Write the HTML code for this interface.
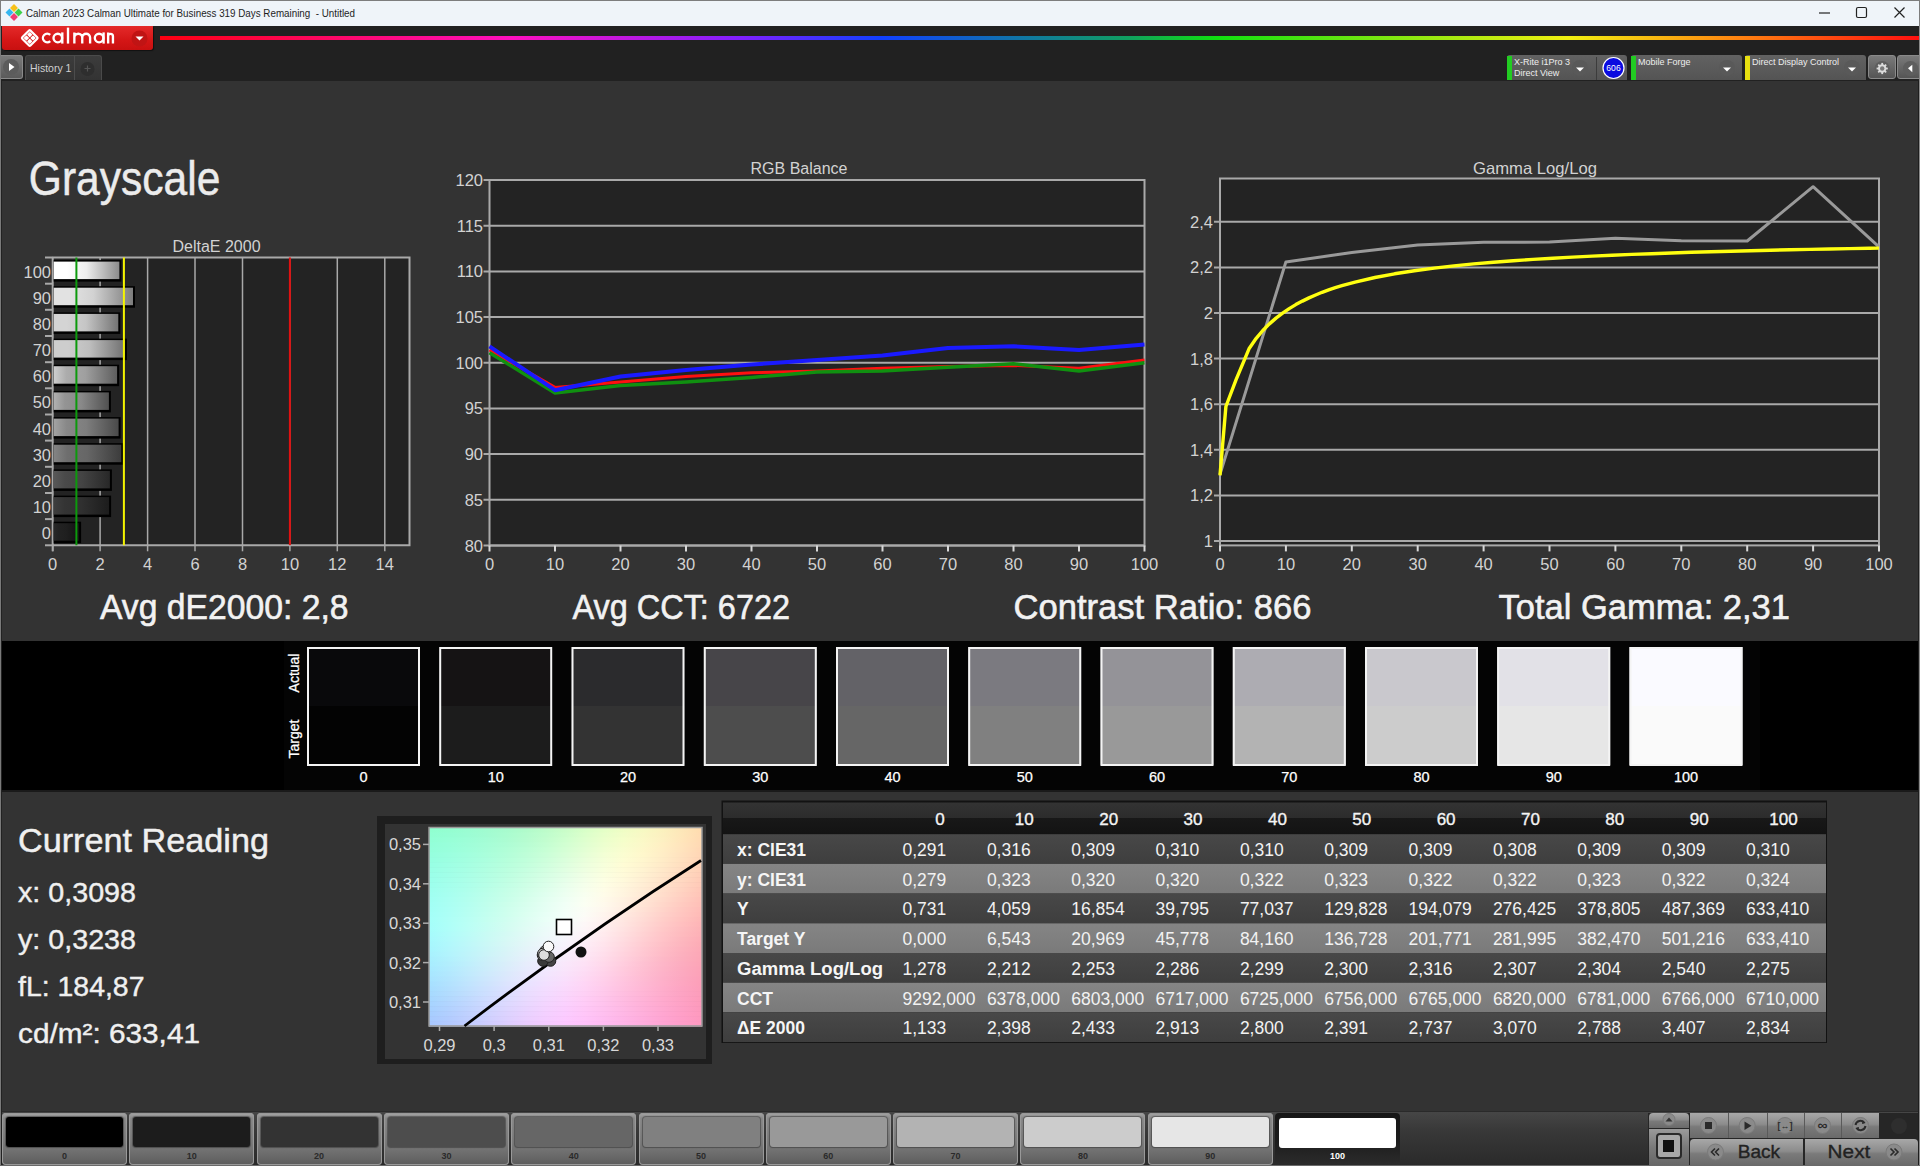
<!DOCTYPE html>
<html><head><meta charset="utf-8"><style>
*{margin:0;padding:0;box-sizing:border-box}
html,body{width:1920px;height:1166px;overflow:hidden;background:#333;font-family:"Liberation Sans",sans-serif}
.a{position:absolute}
svg{position:absolute;left:0;top:0}
</style></head><body>
<div class="a" style="left:0;top:81px;width:1920px;height:1085px;background:#333"></div>
<div class="a" style="left:0;top:0;width:1920px;height:26px;background:#eff4f9;border-top:1px solid #7d7d7d;border-left:1px solid #7d7d7d;border-right:1px solid #7d7d7d"></div>
<div class="a" style="left:0;top:26px;width:1920px;height:55px;background:#212121;border-left:1px solid #555"></div>
<div class="a" style="left:1px;top:641px;width:1917px;height:150px;background:#000"></div>
<svg width="30" height="26" style="left:0;top:0">
<g transform="translate(14,12.5) rotate(45)">
<rect x="-6" y="-6" width="5.6" height="5.6" fill="#f7c21a"/>
<rect x="0.4" y="-6" width="5.6" height="5.6" fill="#3fd14a"/>
<rect x="0.4" y="0.4" width="5.6" height="5.6" fill="#ee3d74"/>
<rect x="-6" y="0.4" width="5.6" height="5.6" fill="#35b6f0"/>
</g></svg>
<svg width="400" height="26" style="left:0;top:0" font-family="Liberation Sans"><text x="26" y="17" font-size="11.5" fill="#1e1e1e" textLength="329" lengthAdjust="spacingAndGlyphs" xml:space="preserve">Calman 2023 Calman Ultimate for Business 319 Days Remaining  - Untitled</text></svg>
<svg width="120" height="26" style="left:1800px;top:0">
<line x1="19" y1="13" x2="30" y2="13" stroke="#222" stroke-width="1.2"/>
<rect x="56.5" y="7.5" width="10" height="10" rx="1.5" fill="none" stroke="#222" stroke-width="1.2"/>
<path d="M94.5 7.5 L104.5 17.5 M104.5 7.5 L94.5 17.5" stroke="#222" stroke-width="1.2"/>
</svg>
<div class="a" style="left:2px;top:26px;width:151px;height:24px;background:linear-gradient(#e42a2a,#d41616 60%,#c81010);border-radius:0 0 3px 3px;box-shadow:1px 1px 1px rgba(0,0,0,.5)"></div>
<svg width="160" height="30" style="left:0;top:26px">
<g transform="translate(29.75,12) rotate(45)" fill="none" stroke="#fff" stroke-width="2.2">
<rect x="-5.8" y="-5.8" width="11.6" height="11.6" rx="1"/>
</g>
<g transform="translate(29.75,12) rotate(45)" fill="#fff">
<rect x="-4.3" y="-4.3" width="3.9" height="3.9" rx="0.6"/><rect x="0.4" y="-4.3" width="3.9" height="3.9" rx="0.6"/>
<rect x="-4.3" y="0.4" width="3.9" height="3.9" rx="0.6"/><rect x="0.4" y="0.4" width="3.9" height="3.9" rx="0.6"/>
</g>
<circle cx="139.5" cy="12.5" r="8" fill="#c01414"/>
<path d="M135.5 10.5 L143.5 10.5 L139.5 14.5 Z" fill="#fff"/>
</svg>
<svg width="130" height="50" style="left:0;top:0">
<g fill="none" stroke="#fff" stroke-width="2.35">
<path d="M50.2 34.9 A4.3 4.3 0 1 0 50.2 41.1"/>
<circle cx="57.8" cy="38" r="4.3"/><path d="M62.3 32.4 V43.6"/>
<path d="M68 27.6 V43.6"/>
<path d="M74.35 43.6 V32.4 M74.35 37.7 A3.95 3.95 0 0 1 82.25 37.7 V43.6 M82.25 37.7 A3.92 3.92 0 0 1 90.1 37.7 V43.6"/>
<circle cx="99.1" cy="38" r="4.3"/><path d="M103.6 32.4 V43.6"/>
<path d="M108.15 43.6 V32.4 M108.15 36.2 A2.4 2.4 0 0 1 112.95 36.2 V43.6"/>
</g></svg>
<div class="a" style="left:160px;top:36px;width:1760px;height:4px;background:linear-gradient(90deg,#ff0010 0%,#ff10c0 20%,#8020ff 33%,#1040ff 41%,#10a060 55%,#10e010 60%,#f0f010 80%,#ff8010 90%,#ff1010 100%)"></div>
<div class="a" style="left:1px;top:55px;width:22px;height:24px;background:linear-gradient(#7a7a7a,#5a5a5a);border-radius:0 3px 3px 0;border:1px solid #8a8a8a;border-left:none"></div>
<svg width="24" height="26" style="left:0;top:55px"><circle cx="11" cy="12" r="8" fill="#5c5c5c"/><path d="M9 8 L14.5 12 L9 16Z" fill="#fff"/></svg>
<div class="a" style="left:25px;top:55px;width:77px;height:25px;background:linear-gradient(#3c3c3c,#333);border-radius:3px 3px 0 0;border:1px solid #4a4a4a;border-bottom:none"></div>
<div class="a" style="left:74px;top:56px;width:1px;height:24px;background:#4c4c4c"></div>
<div class="a" style="left:30px;top:62px;font-size:10.5px;color:#d0d0d0;white-space:nowrap">History 1</div>
<svg width="30" height="26" style="left:74px;top:55px"><circle cx="13.5" cy="14" r="7" fill="#2e2e2e"/><path d="M13.5 10.5v6M10.5 13.5h6" stroke="#555" stroke-width="1.2"/></svg>
<div class="a" style="left:1507px;top:55px;width:120px;height:25px;background:linear-gradient(#626262,#545454);border-radius:3px 3px 0 0"></div><div class="a" style="left:1507px;top:56px;width:5px;height:24px;background:#22cc22"></div><div class="a" style="left:1514px;top:56.5px;font-size:9px;line-height:11.75px;color:#eee;white-space:nowrap">X-Rite i1Pro 3<br>Direct View</div>
<div class="a" style="left:1631px;top:55px;width:111px;height:25px;background:linear-gradient(#626262,#545454);border-radius:3px 3px 0 0"></div><div class="a" style="left:1631px;top:56px;width:5px;height:24px;background:#22cc22"></div><div class="a" style="left:1638px;top:56.5px;font-size:9px;line-height:11.75px;color:#eee;white-space:nowrap">Mobile Forge</div>
<div class="a" style="left:1745px;top:55px;width:121px;height:25px;background:linear-gradient(#626262,#545454);border-radius:3px 3px 0 0"></div><div class="a" style="left:1745px;top:56px;width:5px;height:24px;background:#e8e010"></div><div class="a" style="left:1752px;top:56.5px;font-size:9px;line-height:11.75px;color:#eee;white-space:nowrap">Direct Display Control</div>
<div class="a" style="left:1596px;top:57px;width:1px;height:23px;background:#3c3c3c"></div>
<svg width="420" height="30" style="left:1500px;top:52px">
<circle cx="80" cy="16" r="8" fill="#595959"/><path d="M76 15.5h8l-4 4z" fill="#fff"/>
<circle cx="113.5" cy="16" r="10.5" fill="#0a0ae0" stroke="#fff" stroke-width="1.2"/>
<text x="113.5" y="19.2" font-size="8.6" fill="#fff" text-anchor="middle" font-family="Liberation Sans">606</text>
<circle cx="227" cy="16" r="8" fill="#595959"/><path d="M223 15.5h8l-4 4z" fill="#fff"/>
<circle cx="352" cy="16" r="8" fill="#595959"/><path d="M348 15.5h8l-4 4z" fill="#fff"/>
</svg>
<div class="a" style="left:1868px;top:55px;width:28px;height:24px;background:linear-gradient(#7a7a7a,#555);border-radius:3px;border:1px solid #8a8a8a"></div>
<div class="a" style="left:1897px;top:55px;width:23px;height:24px;background:linear-gradient(#7a7a7a,#555);border-radius:3px 0 0 3px;border:1px solid #8a8a8a"></div>
<svg width="60" height="30" style="left:1860px;top:52px">
<g transform="translate(22.2,16.5)"><circle r="7.6" fill="#5e5e5e"/><g fill="#dcdcdc"><circle r="4.2"/>
<rect x="-0.9" y="-5.6" width="1.8" height="11.2"/><rect x="-0.9" y="-5.6" width="1.8" height="11.2" transform="rotate(45)"/><rect x="-0.9" y="-5.6" width="1.8" height="11.2" transform="rotate(90)"/><rect x="-0.9" y="-5.6" width="1.8" height="11.2" transform="rotate(135)"/></g>
<circle r="2.2" fill="#7a7a7a"/></g>
<circle cx="50.5" cy="16.5" r="7.6" fill="#5e5e5e"/><path d="M52.3 12.7 L48 16.3 L52.3 20.3z" fill="#fff"/>
</svg>
<svg width="1920" height="640" style="left:0;top:0" font-family="Liberation Sans">
<text x="28.8" y="194.6" font-size="48.5" fill="#ececec" stroke="#ececec" stroke-width="0.5" textLength="191.5" lengthAdjust="spacingAndGlyphs">Grayscale</text>
<text x="216.5" y="252" font-size="16" fill="#d2d2d2" text-anchor="middle">DeltaE 2000</text>
<rect x="52.7" y="257.5" width="356.8" height="287.79999999999995" fill="#232323"/>
<line x1="147.6" y1="257.5" x2="147.6" y2="545.3" stroke="#a9a9a9" stroke-width="1.5"/>
<line x1="195.0" y1="257.5" x2="195.0" y2="545.3" stroke="#a9a9a9" stroke-width="1.5"/>
<line x1="242.5" y1="257.5" x2="242.5" y2="545.3" stroke="#a9a9a9" stroke-width="1.5"/>
<line x1="289.9" y1="257.5" x2="289.9" y2="545.3" stroke="#a9a9a9" stroke-width="1.5"/>
<line x1="337.3" y1="257.5" x2="337.3" y2="545.3" stroke="#a9a9a9" stroke-width="1.5"/>
<line x1="384.8" y1="257.5" x2="384.8" y2="545.3" stroke="#a9a9a9" stroke-width="1.5"/>
<line x1="100.1" y1="257.5" x2="100.1" y2="545.3" stroke="#a9a9a9" stroke-width="1.5"/>
<path d="M52.7 257.5 H409.5 V545.3 H52.7" fill="none" stroke="#a9a9a9" stroke-width="2"/>
<line x1="52.7" y1="257.5" x2="52.7" y2="551.3" stroke="#a9a9a9" stroke-width="2"/>
<defs>
<linearGradient id="bg0" x1="0" x2="1" y1="0" y2="0"><stop offset="0" stop-color="#ffffff"/><stop offset="0.2" stop-color="#ffffff"/><stop offset="0.5" stop-color="#ededed"/><stop offset="1" stop-color="#8c8c8c"/></linearGradient>
<linearGradient id="bg1" x1="0" x2="1" y1="0" y2="0"><stop offset="0" stop-color="#e2e2e2"/><stop offset="0.2" stop-color="#e2e2e2"/><stop offset="0.5" stop-color="#d2d2d2"/><stop offset="1" stop-color="#7c7c7c"/></linearGradient>
<linearGradient id="bg2" x1="0" x2="1" y1="0" y2="0"><stop offset="0" stop-color="#d4d4d4"/><stop offset="0.2" stop-color="#d4d4d4"/><stop offset="0.5" stop-color="#c5c5c5"/><stop offset="1" stop-color="#747474"/></linearGradient>
<linearGradient id="bg3" x1="0" x2="1" y1="0" y2="0"><stop offset="0" stop-color="#cdcdcd"/><stop offset="0.2" stop-color="#cdcdcd"/><stop offset="0.5" stop-color="#bebebe"/><stop offset="1" stop-color="#707070"/></linearGradient>
<linearGradient id="bg4" x1="0" x2="1" y1="0" y2="0"><stop offset="0" stop-color="#cecece"/><stop offset="0.2" stop-color="#acacac"/><stop offset="0.5" stop-color="#9f9f9f"/><stop offset="1" stop-color="#5e5e5e"/></linearGradient>
<linearGradient id="bg5" x1="0" x2="1" y1="0" y2="0"><stop offset="0" stop-color="#b1b1b1"/><stop offset="0.2" stop-color="#949494"/><stop offset="0.5" stop-color="#898989"/><stop offset="1" stop-color="#515151"/></linearGradient>
<linearGradient id="bg6" x1="0" x2="1" y1="0" y2="0"><stop offset="0" stop-color="#a3a3a3"/><stop offset="0.2" stop-color="#888888"/><stop offset="0.5" stop-color="#7e7e7e"/><stop offset="1" stop-color="#4a4a4a"/></linearGradient>
<linearGradient id="bg7" x1="0" x2="1" y1="0" y2="0"><stop offset="0" stop-color="#848484"/><stop offset="0.2" stop-color="#6e6e6e"/><stop offset="0.5" stop-color="#666666"/><stop offset="1" stop-color="#3c3c3c"/></linearGradient>
<linearGradient id="bg8" x1="0" x2="1" y1="0" y2="0"><stop offset="0" stop-color="#585858"/><stop offset="0.2" stop-color="#4a4a4a"/><stop offset="0.5" stop-color="#444444"/><stop offset="1" stop-color="#282828"/></linearGradient>
<linearGradient id="bg9" x1="0" x2="1" y1="0" y2="0"><stop offset="0" stop-color="#3e3e3e"/><stop offset="0.2" stop-color="#343434"/><stop offset="0.5" stop-color="#303030"/><stop offset="1" stop-color="#1c1c1c"/></linearGradient>
<linearGradient id="bg10" x1="0" x2="1" y1="0" y2="0"><stop offset="0" stop-color="#282828"/><stop offset="0.2" stop-color="#222222"/><stop offset="0.5" stop-color="#1f1f1f"/><stop offset="1" stop-color="#121212"/></linearGradient>
</defs>
<rect x="53.7" y="260.1" width="67.7" height="21.5" fill="#000"/>
<rect x="53.7" y="261.6" width="65.7" height="17.5" fill="url(#bg0)"/>
<text x="51" y="277.6" font-size="16.5" fill="#d2d2d2" text-anchor="end">100</text>
<rect x="53.7" y="286.2" width="81.3" height="21.5" fill="#000"/>
<rect x="53.7" y="287.7" width="79.3" height="17.5" fill="url(#bg1)"/>
<text x="51" y="303.7" font-size="16.5" fill="#d2d2d2" text-anchor="end">90</text>
<rect x="53.7" y="312.4" width="66.6" height="21.5" fill="#000"/>
<rect x="53.7" y="313.9" width="64.6" height="17.5" fill="url(#bg2)"/>
<text x="51" y="329.9" font-size="16.5" fill="#d2d2d2" text-anchor="end">80</text>
<rect x="53.7" y="338.6" width="73.3" height="21.5" fill="#000"/>
<rect x="53.7" y="340.1" width="71.3" height="17.5" fill="url(#bg3)"/>
<text x="51" y="356.1" font-size="16.5" fill="#d2d2d2" text-anchor="end">70</text>
<rect x="53.7" y="364.7" width="65.4" height="21.5" fill="#000"/>
<rect x="53.7" y="366.2" width="63.4" height="17.5" fill="url(#bg4)"/>
<text x="51" y="382.2" font-size="16.5" fill="#d2d2d2" text-anchor="end">60</text>
<rect x="53.7" y="390.9" width="57.2" height="21.5" fill="#000"/>
<rect x="53.7" y="392.4" width="55.2" height="17.5" fill="url(#bg5)"/>
<text x="51" y="408.4" font-size="16.5" fill="#d2d2d2" text-anchor="end">50</text>
<rect x="53.7" y="417.1" width="66.9" height="21.5" fill="#000"/>
<rect x="53.7" y="418.6" width="64.9" height="17.5" fill="url(#bg6)"/>
<text x="51" y="434.6" font-size="16.5" fill="#d2d2d2" text-anchor="end">40</text>
<rect x="53.7" y="443.2" width="69.6" height="21.5" fill="#000"/>
<rect x="53.7" y="444.7" width="67.6" height="17.5" fill="url(#bg7)"/>
<text x="51" y="460.7" font-size="16.5" fill="#d2d2d2" text-anchor="end">30</text>
<rect x="53.7" y="469.4" width="58.2" height="21.5" fill="#000"/>
<rect x="53.7" y="470.9" width="56.2" height="17.5" fill="url(#bg8)"/>
<text x="51" y="486.9" font-size="16.5" fill="#d2d2d2" text-anchor="end">20</text>
<rect x="53.7" y="495.6" width="57.4" height="21.5" fill="#000"/>
<rect x="53.7" y="497.1" width="55.4" height="17.5" fill="url(#bg9)"/>
<text x="51" y="513.1" font-size="16.5" fill="#d2d2d2" text-anchor="end">10</text>
<rect x="53.7" y="521.7" width="27.4" height="21.5" fill="#000"/>
<rect x="53.7" y="523.2" width="25.4" height="17.5" fill="url(#bg10)"/>
<text x="51" y="539.2" font-size="16.5" fill="#d2d2d2" text-anchor="end">0</text>
<line x1="45" y1="257.5" x2="53" y2="257.5" stroke="#a9a9a9" stroke-width="2"/>
<line x1="45" y1="283.7" x2="53" y2="283.7" stroke="#a9a9a9" stroke-width="2"/>
<line x1="45" y1="309.8" x2="53" y2="309.8" stroke="#a9a9a9" stroke-width="2"/>
<line x1="45" y1="336.0" x2="53" y2="336.0" stroke="#a9a9a9" stroke-width="2"/>
<line x1="45" y1="362.2" x2="53" y2="362.2" stroke="#a9a9a9" stroke-width="2"/>
<line x1="45" y1="388.3" x2="53" y2="388.3" stroke="#a9a9a9" stroke-width="2"/>
<line x1="45" y1="414.5" x2="53" y2="414.5" stroke="#a9a9a9" stroke-width="2"/>
<line x1="45" y1="440.6" x2="53" y2="440.6" stroke="#a9a9a9" stroke-width="2"/>
<line x1="45" y1="466.8" x2="53" y2="466.8" stroke="#a9a9a9" stroke-width="2"/>
<line x1="45" y1="493.0" x2="53" y2="493.0" stroke="#a9a9a9" stroke-width="2"/>
<line x1="45" y1="519.1" x2="53" y2="519.1" stroke="#a9a9a9" stroke-width="2"/>
<line x1="45" y1="545.3" x2="53" y2="545.3" stroke="#a9a9a9" stroke-width="2"/>
<line x1="76.4" y1="257.5" x2="76.4" y2="545.3" stroke="#0c9a0c" stroke-width="2"/>
<line x1="123.9" y1="257.5" x2="123.9" y2="545.3" stroke="#f4f400" stroke-width="2"/>
<line x1="289.9" y1="257.5" x2="289.9" y2="545.3" stroke="#e01010" stroke-width="2"/>
<line x1="52.7" y1="545.3" x2="52.7" y2="551.3" stroke="#a9a9a9" stroke-width="1.5"/>
<text x="52.7" y="570" font-size="16.5" fill="#d2d2d2" text-anchor="middle">0</text>
<line x1="100.1" y1="545.3" x2="100.1" y2="551.3" stroke="#a9a9a9" stroke-width="1.5"/>
<text x="100.1" y="570" font-size="16.5" fill="#d2d2d2" text-anchor="middle">2</text>
<line x1="147.6" y1="545.3" x2="147.6" y2="551.3" stroke="#a9a9a9" stroke-width="1.5"/>
<text x="147.6" y="570" font-size="16.5" fill="#d2d2d2" text-anchor="middle">4</text>
<line x1="195.0" y1="545.3" x2="195.0" y2="551.3" stroke="#a9a9a9" stroke-width="1.5"/>
<text x="195.0" y="570" font-size="16.5" fill="#d2d2d2" text-anchor="middle">6</text>
<line x1="242.5" y1="545.3" x2="242.5" y2="551.3" stroke="#a9a9a9" stroke-width="1.5"/>
<text x="242.5" y="570" font-size="16.5" fill="#d2d2d2" text-anchor="middle">8</text>
<line x1="289.9" y1="545.3" x2="289.9" y2="551.3" stroke="#a9a9a9" stroke-width="1.5"/>
<text x="289.9" y="570" font-size="16.5" fill="#d2d2d2" text-anchor="middle">10</text>
<line x1="337.3" y1="545.3" x2="337.3" y2="551.3" stroke="#a9a9a9" stroke-width="1.5"/>
<text x="337.3" y="570" font-size="16.5" fill="#d2d2d2" text-anchor="middle">12</text>
<line x1="384.8" y1="545.3" x2="384.8" y2="551.3" stroke="#a9a9a9" stroke-width="1.5"/>
<text x="384.8" y="570" font-size="16.5" fill="#d2d2d2" text-anchor="middle">14</text>
<text x="799" y="173.5" font-size="16" fill="#d2d2d2" text-anchor="middle">RGB Balance</text>
<rect x="489.5" y="180" width="655.0" height="365.5" fill="#232323"/>
<line x1="483.5" y1="545.5" x2="1144.5" y2="545.5" stroke="#a9a9a9" stroke-width="2"/>
<text x="483" y="551.5" font-size="16.5" fill="#d2d2d2" text-anchor="end">80</text>
<line x1="483.5" y1="499.8" x2="1144.5" y2="499.8" stroke="#a9a9a9" stroke-width="2"/>
<text x="483" y="505.8" font-size="16.5" fill="#d2d2d2" text-anchor="end">85</text>
<line x1="483.5" y1="454.1" x2="1144.5" y2="454.1" stroke="#a9a9a9" stroke-width="2"/>
<text x="483" y="460.1" font-size="16.5" fill="#d2d2d2" text-anchor="end">90</text>
<line x1="483.5" y1="408.4" x2="1144.5" y2="408.4" stroke="#a9a9a9" stroke-width="2"/>
<text x="483" y="414.4" font-size="16.5" fill="#d2d2d2" text-anchor="end">95</text>
<line x1="483.5" y1="362.8" x2="1144.5" y2="362.8" stroke="#a9a9a9" stroke-width="2"/>
<text x="483" y="368.8" font-size="16.5" fill="#d2d2d2" text-anchor="end">100</text>
<line x1="483.5" y1="317.1" x2="1144.5" y2="317.1" stroke="#a9a9a9" stroke-width="2"/>
<text x="483" y="323.1" font-size="16.5" fill="#d2d2d2" text-anchor="end">105</text>
<line x1="483.5" y1="271.4" x2="1144.5" y2="271.4" stroke="#a9a9a9" stroke-width="2"/>
<text x="483" y="277.4" font-size="16.5" fill="#d2d2d2" text-anchor="end">110</text>
<line x1="483.5" y1="225.7" x2="1144.5" y2="225.7" stroke="#a9a9a9" stroke-width="2"/>
<text x="483" y="231.7" font-size="16.5" fill="#d2d2d2" text-anchor="end">115</text>
<line x1="483.5" y1="180.0" x2="1144.5" y2="180.0" stroke="#a9a9a9" stroke-width="2"/>
<text x="483" y="186.0" font-size="16.5" fill="#d2d2d2" text-anchor="end">120</text>
<rect x="489.5" y="180" width="655.0" height="365.5" fill="none" stroke="#a9a9a9" stroke-width="2"/>
<line x1="489.5" y1="545.5" x2="489.5" y2="551.5" stroke="#d8d8d8" stroke-width="2"/>
<text x="489.5" y="570" font-size="16.5" fill="#d2d2d2" text-anchor="middle">0</text>
<line x1="555.0" y1="545.5" x2="555.0" y2="551.5" stroke="#d8d8d8" stroke-width="2"/>
<text x="555.0" y="570" font-size="16.5" fill="#d2d2d2" text-anchor="middle">10</text>
<line x1="620.5" y1="545.5" x2="620.5" y2="551.5" stroke="#d8d8d8" stroke-width="2"/>
<text x="620.5" y="570" font-size="16.5" fill="#d2d2d2" text-anchor="middle">20</text>
<line x1="686.0" y1="545.5" x2="686.0" y2="551.5" stroke="#d8d8d8" stroke-width="2"/>
<text x="686.0" y="570" font-size="16.5" fill="#d2d2d2" text-anchor="middle">30</text>
<line x1="751.5" y1="545.5" x2="751.5" y2="551.5" stroke="#d8d8d8" stroke-width="2"/>
<text x="751.5" y="570" font-size="16.5" fill="#d2d2d2" text-anchor="middle">40</text>
<line x1="817.0" y1="545.5" x2="817.0" y2="551.5" stroke="#d8d8d8" stroke-width="2"/>
<text x="817.0" y="570" font-size="16.5" fill="#d2d2d2" text-anchor="middle">50</text>
<line x1="882.5" y1="545.5" x2="882.5" y2="551.5" stroke="#d8d8d8" stroke-width="2"/>
<text x="882.5" y="570" font-size="16.5" fill="#d2d2d2" text-anchor="middle">60</text>
<line x1="948.0" y1="545.5" x2="948.0" y2="551.5" stroke="#d8d8d8" stroke-width="2"/>
<text x="948.0" y="570" font-size="16.5" fill="#d2d2d2" text-anchor="middle">70</text>
<line x1="1013.5" y1="545.5" x2="1013.5" y2="551.5" stroke="#d8d8d8" stroke-width="2"/>
<text x="1013.5" y="570" font-size="16.5" fill="#d2d2d2" text-anchor="middle">80</text>
<line x1="1079.0" y1="545.5" x2="1079.0" y2="551.5" stroke="#d8d8d8" stroke-width="2"/>
<text x="1079.0" y="570" font-size="16.5" fill="#d2d2d2" text-anchor="middle">90</text>
<line x1="1144.5" y1="545.5" x2="1144.5" y2="551.5" stroke="#d8d8d8" stroke-width="2"/>
<text x="1144.5" y="570" font-size="16.5" fill="#d2d2d2" text-anchor="middle">100</text>
<polyline points="489.5,350.0 555.0,387.4 620.5,381.9 686.0,376.5 751.5,372.8 817.0,371.0 882.5,368.2 948.0,366.4 1013.5,365.5 1079.0,368.2 1144.5,360.0" fill="none" stroke="#ff1010" stroke-width="3" stroke-linejoin="round"/>
<polyline points="489.5,352.7 555.0,392.9 620.5,385.6 686.0,381.9 751.5,377.4 817.0,371.9 882.5,371.0 948.0,367.3 1013.5,363.7 1079.0,371.0 1144.5,362.8" fill="none" stroke="#109010" stroke-width="3.5" stroke-linejoin="round"/>
<polyline points="489.5,346.3 555.0,390.2 620.5,376.5 686.0,370.1 751.5,364.6 817.0,360.0 882.5,355.4 948.0,348.1 1013.5,346.3 1079.0,350.0 1144.5,344.5" fill="none" stroke="#1a1aff" stroke-width="4" stroke-linejoin="round"/>
<text x="1473" y="173.5" font-size="16.5" fill="#d2d2d2" textLength="124" lengthAdjust="spacingAndGlyphs">Gamma Log/Log</text>
<rect x="1220" y="178.5" width="659" height="366.9" fill="#232323"/>
<line x1="1214" y1="541.0" x2="1879" y2="541.0" stroke="#a9a9a9" stroke-width="2"/>
<text x="1213" y="547.0" font-size="16.5" fill="#d2d2d2" text-anchor="end">1</text>
<line x1="1214" y1="495.4" x2="1879" y2="495.4" stroke="#a9a9a9" stroke-width="2"/>
<text x="1213" y="501.4" font-size="16.5" fill="#d2d2d2" text-anchor="end">1,2</text>
<line x1="1214" y1="449.8" x2="1879" y2="449.8" stroke="#a9a9a9" stroke-width="2"/>
<text x="1213" y="455.8" font-size="16.5" fill="#d2d2d2" text-anchor="end">1,4</text>
<line x1="1214" y1="404.2" x2="1879" y2="404.2" stroke="#a9a9a9" stroke-width="2"/>
<text x="1213" y="410.2" font-size="16.5" fill="#d2d2d2" text-anchor="end">1,6</text>
<line x1="1214" y1="358.6" x2="1879" y2="358.6" stroke="#a9a9a9" stroke-width="2"/>
<text x="1213" y="364.6" font-size="16.5" fill="#d2d2d2" text-anchor="end">1,8</text>
<line x1="1214" y1="313.0" x2="1879" y2="313.0" stroke="#a9a9a9" stroke-width="2"/>
<text x="1213" y="319.0" font-size="16.5" fill="#d2d2d2" text-anchor="end">2</text>
<line x1="1214" y1="267.4" x2="1879" y2="267.4" stroke="#a9a9a9" stroke-width="2"/>
<text x="1213" y="273.4" font-size="16.5" fill="#d2d2d2" text-anchor="end">2,2</text>
<line x1="1214" y1="221.8" x2="1879" y2="221.8" stroke="#a9a9a9" stroke-width="2"/>
<text x="1213" y="227.8" font-size="16.5" fill="#d2d2d2" text-anchor="end">2,4</text>
<rect x="1220" y="178.5" width="659" height="366.9" fill="none" stroke="#a9a9a9" stroke-width="2"/>
<line x1="1220.0" y1="545.4" x2="1220.0" y2="551.4" stroke="#d8d8d8" stroke-width="2"/>
<text x="1220.0" y="570" font-size="16.5" fill="#d2d2d2" text-anchor="middle">0</text>
<line x1="1285.9" y1="545.4" x2="1285.9" y2="551.4" stroke="#d8d8d8" stroke-width="2"/>
<text x="1285.9" y="570" font-size="16.5" fill="#d2d2d2" text-anchor="middle">10</text>
<line x1="1351.8" y1="545.4" x2="1351.8" y2="551.4" stroke="#d8d8d8" stroke-width="2"/>
<text x="1351.8" y="570" font-size="16.5" fill="#d2d2d2" text-anchor="middle">20</text>
<line x1="1417.7" y1="545.4" x2="1417.7" y2="551.4" stroke="#d8d8d8" stroke-width="2"/>
<text x="1417.7" y="570" font-size="16.5" fill="#d2d2d2" text-anchor="middle">30</text>
<line x1="1483.6" y1="545.4" x2="1483.6" y2="551.4" stroke="#d8d8d8" stroke-width="2"/>
<text x="1483.6" y="570" font-size="16.5" fill="#d2d2d2" text-anchor="middle">40</text>
<line x1="1549.5" y1="545.4" x2="1549.5" y2="551.4" stroke="#d8d8d8" stroke-width="2"/>
<text x="1549.5" y="570" font-size="16.5" fill="#d2d2d2" text-anchor="middle">50</text>
<line x1="1615.4" y1="545.4" x2="1615.4" y2="551.4" stroke="#d8d8d8" stroke-width="2"/>
<text x="1615.4" y="570" font-size="16.5" fill="#d2d2d2" text-anchor="middle">60</text>
<line x1="1681.3" y1="545.4" x2="1681.3" y2="551.4" stroke="#d8d8d8" stroke-width="2"/>
<text x="1681.3" y="570" font-size="16.5" fill="#d2d2d2" text-anchor="middle">70</text>
<line x1="1747.2" y1="545.4" x2="1747.2" y2="551.4" stroke="#d8d8d8" stroke-width="2"/>
<text x="1747.2" y="570" font-size="16.5" fill="#d2d2d2" text-anchor="middle">80</text>
<line x1="1813.1" y1="545.4" x2="1813.1" y2="551.4" stroke="#d8d8d8" stroke-width="2"/>
<text x="1813.1" y="570" font-size="16.5" fill="#d2d2d2" text-anchor="middle">90</text>
<line x1="1879.0" y1="545.4" x2="1879.0" y2="551.4" stroke="#d8d8d8" stroke-width="2"/>
<text x="1879.0" y="570" font-size="16.5" fill="#d2d2d2" text-anchor="middle">100</text>
<polyline points="1220.0,474.4 1285.9,261.9 1351.8,252.6 1417.7,245.1 1483.6,242.3 1549.5,242.1 1615.4,238.2 1681.3,240.7 1747.2,241.0 1813.1,186.7 1879.0,246.9" fill="none" stroke="#9a9a9a" stroke-width="3" stroke-linejoin="round"/>
<polyline points="1220.0,475.3 1225.9,406.5 1236.1,379.6 1249.0,348.8 1256.2,338.3 1262.8,330.5 1269.4,323.9 1276.0,318.1 1282.6,313.1 1289.2,308.6 1295.8,304.6 1302.4,301.1 1309.0,297.9 1315.6,295.0 1322.1,292.3 1328.7,289.9 1335.3,287.7 1341.9,285.7 1348.5,283.8 1355.1,282.1 1374.9,277.5 1394.6,273.8 1414.4,270.7 1434.2,268.1 1453.9,265.9 1473.7,263.9 1493.5,262.2 1513.3,260.7 1533.0,259.4 1552.8,258.2 1572.6,257.1 1592.3,256.1 1612.1,255.2 1631.9,254.4 1651.6,253.7 1671.4,253.0 1691.2,252.3 1711.0,251.8 1730.7,251.2 1750.5,250.7 1770.3,250.2 1790.0,249.8 1809.8,249.4 1829.6,249.0 1849.3,248.6 1869.1,248.3 1879.0,248.1" fill="none" stroke="#ffff10" stroke-width="3.4" stroke-linejoin="round"/>
<text x="100" y="618.5" font-size="35.5" fill="#f2f2f2" stroke="#f2f2f2" stroke-width="0.6" textLength="248.5" lengthAdjust="spacingAndGlyphs">Avg dE2000: 2,8</text>
<text x="572.5" y="618.5" font-size="35.5" fill="#f2f2f2" stroke="#f2f2f2" stroke-width="0.6" textLength="217.5" lengthAdjust="spacingAndGlyphs">Avg CCT: 6722</text>
<text x="1013.5" y="618.5" font-size="35.5" fill="#f2f2f2" stroke="#f2f2f2" stroke-width="0.6" textLength="298" lengthAdjust="spacingAndGlyphs">Contrast Ratio: 866</text>
<text x="1498.5" y="618.5" font-size="35.5" fill="#f2f2f2" stroke="#f2f2f2" stroke-width="0.6" textLength="291.5" lengthAdjust="spacingAndGlyphs">Total Gamma: 2,31</text>
</svg>
<svg width="1920" height="160" style="left:0;top:636px" font-family="Liberation Sans">
<rect x="284" y="5" width="1476" height="150" fill="#040404"/>
<rect x="307.0" y="11" width="113" height="59" fill="#09090b"/>
<rect x="307.0" y="70" width="113" height="59" fill="#030303"/>
<rect x="308.0" y="12" width="111" height="117" fill="none" stroke="#f4f4f4" stroke-width="2"/>
<text x="363.5" y="145.5" font-size="14.5" fill="#fff" stroke="#fff" stroke-width="0.25" text-anchor="middle">0</text>
<rect x="439.2" y="11" width="113" height="59" fill="#151314"/>
<rect x="439.2" y="70" width="113" height="59" fill="#1c1c1c"/>
<rect x="440.2" y="12" width="111" height="117" fill="none" stroke="#f4f4f4" stroke-width="2"/>
<text x="495.8" y="145.5" font-size="14.5" fill="#fff" stroke="#fff" stroke-width="0.25" text-anchor="middle">10</text>
<rect x="571.5" y="11" width="113" height="59" fill="#2b2b2d"/>
<rect x="571.5" y="70" width="113" height="59" fill="#333333"/>
<rect x="572.5" y="12" width="111" height="117" fill="none" stroke="#f4f4f4" stroke-width="2"/>
<text x="628.0" y="145.5" font-size="14.5" fill="#fff" stroke="#fff" stroke-width="0.25" text-anchor="middle">20</text>
<rect x="703.8" y="11" width="113" height="59" fill="#474549"/>
<rect x="703.8" y="70" width="113" height="59" fill="#4d4d4d"/>
<rect x="704.8" y="12" width="111" height="117" fill="none" stroke="#f4f4f4" stroke-width="2"/>
<text x="760.2" y="145.5" font-size="14.5" fill="#fff" stroke="#fff" stroke-width="0.25" text-anchor="middle">30</text>
<rect x="836.0" y="11" width="113" height="59" fill="#636267"/>
<rect x="836.0" y="70" width="113" height="59" fill="#666666"/>
<rect x="837.0" y="12" width="111" height="117" fill="none" stroke="#f4f4f4" stroke-width="2"/>
<text x="892.5" y="145.5" font-size="14.5" fill="#fff" stroke="#fff" stroke-width="0.25" text-anchor="middle">40</text>
<rect x="968.2" y="11" width="113" height="59" fill="#7b7a80"/>
<rect x="968.2" y="70" width="113" height="59" fill="#808080"/>
<rect x="969.2" y="12" width="111" height="117" fill="none" stroke="#f4f4f4" stroke-width="2"/>
<text x="1024.8" y="145.5" font-size="14.5" fill="#fff" stroke="#fff" stroke-width="0.25" text-anchor="middle">50</text>
<rect x="1100.5" y="11" width="113" height="59" fill="#949398"/>
<rect x="1100.5" y="70" width="113" height="59" fill="#999999"/>
<rect x="1101.5" y="12" width="111" height="117" fill="none" stroke="#f4f4f4" stroke-width="2"/>
<text x="1157.0" y="145.5" font-size="14.5" fill="#fff" stroke="#fff" stroke-width="0.25" text-anchor="middle">60</text>
<rect x="1232.8" y="11" width="113" height="59" fill="#adacb2"/>
<rect x="1232.8" y="70" width="113" height="59" fill="#b3b3b3"/>
<rect x="1233.8" y="12" width="111" height="117" fill="none" stroke="#f4f4f4" stroke-width="2"/>
<text x="1289.2" y="145.5" font-size="14.5" fill="#fff" stroke="#fff" stroke-width="0.25" text-anchor="middle">70</text>
<rect x="1365.0" y="11" width="113" height="59" fill="#c9c8cd"/>
<rect x="1365.0" y="70" width="113" height="59" fill="#cccccc"/>
<rect x="1366.0" y="12" width="111" height="117" fill="none" stroke="#f4f4f4" stroke-width="2"/>
<text x="1421.5" y="145.5" font-size="14.5" fill="#fff" stroke="#fff" stroke-width="0.25" text-anchor="middle">80</text>
<rect x="1497.2" y="11" width="113" height="59" fill="#e2e1e7"/>
<rect x="1497.2" y="70" width="113" height="59" fill="#e6e6e6"/>
<rect x="1498.2" y="12" width="111" height="117" fill="none" stroke="#f4f4f4" stroke-width="2"/>
<text x="1553.8" y="145.5" font-size="14.5" fill="#fff" stroke="#fff" stroke-width="0.25" text-anchor="middle">90</text>
<rect x="1629.5" y="11" width="113" height="59" fill="#fafaff"/>
<rect x="1629.5" y="70" width="113" height="59" fill="#fafafa"/>
<rect x="1630.5" y="12" width="111" height="117" fill="none" stroke="#f4f4f4" stroke-width="2"/>
<text x="1686.0" y="145.5" font-size="14.5" fill="#fff" stroke="#fff" stroke-width="0.25" text-anchor="middle">100</text>
<text transform="translate(299,37) rotate(-90)" font-size="14" fill="#fff" stroke="#fff" stroke-width="0.25" text-anchor="middle">Actual</text>
<text transform="translate(299,103) rotate(-90)" font-size="14" fill="#fff" stroke="#fff" stroke-width="0.25" text-anchor="middle">Target</text>
</svg>
<svg width="1920" height="320" style="left:0;top:790px" font-family="Liberation Sans">
<rect x="0" y="0" width="1920" height="2" fill="#1a1a1a"/>
<text x="18" y="62" font-size="33.5" fill="#f0f0f0" stroke="#f0f0f0" stroke-width="0.45" textLength="251" lengthAdjust="spacingAndGlyphs">Current Reading</text>
<text x="18" y="111.5" font-size="28" fill="#f0f0f0" stroke="#f0f0f0" stroke-width="0.4" textLength="118" lengthAdjust="spacingAndGlyphs">x: 0,3098</text>
<text x="18" y="158.5" font-size="28" fill="#f0f0f0" stroke="#f0f0f0" stroke-width="0.4" textLength="118" lengthAdjust="spacingAndGlyphs">y: 0,3238</text>
<text x="18" y="205.5" font-size="28" fill="#f0f0f0" stroke="#f0f0f0" stroke-width="0.4" textLength="126.5" lengthAdjust="spacingAndGlyphs">fL: 184,87</text>
<text x="18" y="253" font-size="28" fill="#f0f0f0" stroke="#f0f0f0" stroke-width="0.4" textLength="182" lengthAdjust="spacingAndGlyphs">cd/m²: 633,41</text>
<rect x="377" y="26" width="335" height="248" fill="#1e1e1e"/>
<rect x="385" y="34" width="321" height="235" fill="#333"/>
<defs>
<linearGradient id="cieH" x1="0" x2="1" y1="0" y2="0"><stop offset="0" stop-color="#70ffd0"/><stop offset="0.5" stop-color="#f4fff4"/><stop offset="1" stop-color="#ffe0b8"/></linearGradient>
<linearGradient id="cieV" x1="0" x2="0" y1="0" y2="1"><stop offset="0" stop-color="#80ffc0" stop-opacity="0"/><stop offset="1" stop-color="#c0b8ff" stop-opacity="0"/></linearGradient>
</defs>
<defs><linearGradient id="cr0"><stop offset="0.000" stop-color="#90ffd0"/><stop offset="0.071" stop-color="#94fed1"/><stop offset="0.143" stop-color="#9afdd2"/><stop offset="0.214" stop-color="#a1fcd0"/><stop offset="0.286" stop-color="#a8fbce"/><stop offset="0.357" stop-color="#b1fbcb"/><stop offset="0.429" stop-color="#bdfcca"/><stop offset="0.500" stop-color="#cafdc9"/><stop offset="0.571" stop-color="#d8ffc8"/><stop offset="0.643" stop-color="#e5ffc7"/><stop offset="0.714" stop-color="#f0fdc5"/><stop offset="0.786" stop-color="#f7f9c3"/><stop offset="0.857" stop-color="#fbf1be"/><stop offset="0.929" stop-color="#fde6b8"/><stop offset="1.000" stop-color="#ffdbaf"/></linearGradient><linearGradient id="cr1"><stop offset="0.000" stop-color="#91ffd3"/><stop offset="0.071" stop-color="#95fed4"/><stop offset="0.143" stop-color="#9bfdd4"/><stop offset="0.214" stop-color="#a2fcd2"/><stop offset="0.286" stop-color="#aafcd0"/><stop offset="0.357" stop-color="#b4fcce"/><stop offset="0.429" stop-color="#bffdcd"/><stop offset="0.500" stop-color="#ccfecc"/><stop offset="0.571" stop-color="#dbffcb"/><stop offset="0.643" stop-color="#e8ffca"/><stop offset="0.714" stop-color="#f2fdc8"/><stop offset="0.786" stop-color="#f9f8c5"/><stop offset="0.857" stop-color="#fcf0c0"/><stop offset="0.929" stop-color="#fee6b9"/><stop offset="1.000" stop-color="#ffdab1"/></linearGradient><linearGradient id="cr2"><stop offset="0.000" stop-color="#92ffd6"/><stop offset="0.071" stop-color="#97ffd7"/><stop offset="0.143" stop-color="#9dfed7"/><stop offset="0.214" stop-color="#a4fdd5"/><stop offset="0.286" stop-color="#acfcd2"/><stop offset="0.357" stop-color="#b6fcd0"/><stop offset="0.429" stop-color="#c2fdcf"/><stop offset="0.500" stop-color="#cfffcf"/><stop offset="0.571" stop-color="#deffce"/><stop offset="0.643" stop-color="#ebffcc"/><stop offset="0.714" stop-color="#f5feca"/><stop offset="0.786" stop-color="#fbf8c7"/><stop offset="0.857" stop-color="#fdf0c2"/><stop offset="0.929" stop-color="#ffe5ba"/><stop offset="1.000" stop-color="#ffd9b2"/></linearGradient><linearGradient id="cr3"><stop offset="0.000" stop-color="#93ffd9"/><stop offset="0.071" stop-color="#98ffda"/><stop offset="0.143" stop-color="#9ffed9"/><stop offset="0.214" stop-color="#a6fed7"/><stop offset="0.286" stop-color="#aefdd5"/><stop offset="0.357" stop-color="#b8fdd3"/><stop offset="0.429" stop-color="#c4fed2"/><stop offset="0.500" stop-color="#d2ffd2"/><stop offset="0.571" stop-color="#e0ffd1"/><stop offset="0.643" stop-color="#edffcf"/><stop offset="0.714" stop-color="#f7fdcc"/><stop offset="0.786" stop-color="#fcf8c9"/><stop offset="0.857" stop-color="#ffefc3"/><stop offset="0.929" stop-color="#ffe4bc"/><stop offset="1.000" stop-color="#ffd8b3"/></linearGradient><linearGradient id="cr4"><stop offset="0.000" stop-color="#94ffdb"/><stop offset="0.071" stop-color="#99ffdc"/><stop offset="0.143" stop-color="#a0ffdb"/><stop offset="0.214" stop-color="#a8fed9"/><stop offset="0.286" stop-color="#b1fed7"/><stop offset="0.357" stop-color="#bbfed6"/><stop offset="0.429" stop-color="#c7ffd5"/><stop offset="0.500" stop-color="#d5ffd5"/><stop offset="0.571" stop-color="#e3ffd4"/><stop offset="0.643" stop-color="#f0ffd2"/><stop offset="0.714" stop-color="#f9fdcf"/><stop offset="0.786" stop-color="#fef7ca"/><stop offset="0.857" stop-color="#ffeec5"/><stop offset="0.929" stop-color="#ffe3bd"/><stop offset="1.000" stop-color="#ffd6b4"/></linearGradient><linearGradient id="cr5"><stop offset="0.000" stop-color="#95ffde"/><stop offset="0.071" stop-color="#9bffdf"/><stop offset="0.143" stop-color="#a2ffde"/><stop offset="0.214" stop-color="#aaffdb"/><stop offset="0.286" stop-color="#b3fed9"/><stop offset="0.357" stop-color="#befed8"/><stop offset="0.429" stop-color="#caffd8"/><stop offset="0.500" stop-color="#d8ffd8"/><stop offset="0.571" stop-color="#e6ffd7"/><stop offset="0.643" stop-color="#f3ffd5"/><stop offset="0.714" stop-color="#fbfdd1"/><stop offset="0.786" stop-color="#fff7cc"/><stop offset="0.857" stop-color="#ffedc6"/><stop offset="0.929" stop-color="#ffe1be"/><stop offset="1.000" stop-color="#ffd5b5"/></linearGradient><linearGradient id="cr6"><stop offset="0.000" stop-color="#96ffe1"/><stop offset="0.071" stop-color="#9cffe1"/><stop offset="0.143" stop-color="#a4ffe0"/><stop offset="0.214" stop-color="#acffde"/><stop offset="0.286" stop-color="#b6ffdb"/><stop offset="0.357" stop-color="#c0ffdb"/><stop offset="0.429" stop-color="#cdffdb"/><stop offset="0.500" stop-color="#dbffdc"/><stop offset="0.571" stop-color="#e9ffdb"/><stop offset="0.643" stop-color="#f5ffd8"/><stop offset="0.714" stop-color="#fdfdd3"/><stop offset="0.786" stop-color="#fff6ce"/><stop offset="0.857" stop-color="#ffecc7"/><stop offset="0.929" stop-color="#ffe0bf"/><stop offset="1.000" stop-color="#ffd3b5"/></linearGradient><linearGradient id="cr7"><stop offset="0.000" stop-color="#97ffe4"/><stop offset="0.071" stop-color="#9effe4"/><stop offset="0.143" stop-color="#a6ffe2"/><stop offset="0.214" stop-color="#afffe0"/><stop offset="0.286" stop-color="#b8ffdd"/><stop offset="0.357" stop-color="#c3ffdd"/><stop offset="0.429" stop-color="#d0ffde"/><stop offset="0.500" stop-color="#deffdf"/><stop offset="0.571" stop-color="#ecffde"/><stop offset="0.643" stop-color="#f7ffdb"/><stop offset="0.714" stop-color="#fffcd5"/><stop offset="0.786" stop-color="#fff4cf"/><stop offset="0.857" stop-color="#ffeac8"/><stop offset="0.929" stop-color="#ffdebf"/><stop offset="1.000" stop-color="#ffd1b6"/></linearGradient><linearGradient id="cr8"><stop offset="0.000" stop-color="#99ffe6"/><stop offset="0.071" stop-color="#a0ffe6"/><stop offset="0.143" stop-color="#a8ffe4"/><stop offset="0.214" stop-color="#b1ffe1"/><stop offset="0.286" stop-color="#bbffdf"/><stop offset="0.357" stop-color="#c6ffe0"/><stop offset="0.429" stop-color="#d3ffe1"/><stop offset="0.500" stop-color="#e1ffe2"/><stop offset="0.571" stop-color="#eeffe1"/><stop offset="0.643" stop-color="#f9ffdd"/><stop offset="0.714" stop-color="#fffbd7"/><stop offset="0.786" stop-color="#fff3d1"/><stop offset="0.857" stop-color="#ffe8c9"/><stop offset="0.929" stop-color="#ffdcc0"/><stop offset="1.000" stop-color="#ffd0b7"/></linearGradient><linearGradient id="cr9"><stop offset="0.000" stop-color="#9affe9"/><stop offset="0.071" stop-color="#a1ffe8"/><stop offset="0.143" stop-color="#aaffe6"/><stop offset="0.214" stop-color="#b3ffe3"/><stop offset="0.286" stop-color="#bdffe1"/><stop offset="0.357" stop-color="#c9ffe2"/><stop offset="0.429" stop-color="#d6ffe4"/><stop offset="0.500" stop-color="#e3ffe6"/><stop offset="0.571" stop-color="#f1ffe5"/><stop offset="0.643" stop-color="#fbffe0"/><stop offset="0.714" stop-color="#fffad9"/><stop offset="0.786" stop-color="#fff1d2"/><stop offset="0.857" stop-color="#ffe6ca"/><stop offset="0.929" stop-color="#ffdac0"/><stop offset="1.000" stop-color="#ffcdb7"/></linearGradient><linearGradient id="cr10"><stop offset="0.000" stop-color="#9bffeb"/><stop offset="0.071" stop-color="#a3ffea"/><stop offset="0.143" stop-color="#acffe8"/><stop offset="0.214" stop-color="#b5ffe5"/><stop offset="0.286" stop-color="#c0ffe3"/><stop offset="0.357" stop-color="#ccffe4"/><stop offset="0.429" stop-color="#d9ffe7"/><stop offset="0.500" stop-color="#e6ffe9"/><stop offset="0.571" stop-color="#f3ffe8"/><stop offset="0.643" stop-color="#fdffe3"/><stop offset="0.714" stop-color="#fff9db"/><stop offset="0.786" stop-color="#ffefd3"/><stop offset="0.857" stop-color="#ffe4ca"/><stop offset="0.929" stop-color="#ffd8c1"/><stop offset="1.000" stop-color="#ffcbb7"/></linearGradient><linearGradient id="cr11"><stop offset="0.000" stop-color="#9cffed"/><stop offset="0.071" stop-color="#a4ffec"/><stop offset="0.143" stop-color="#adffea"/><stop offset="0.214" stop-color="#b7ffe7"/><stop offset="0.286" stop-color="#c2ffe5"/><stop offset="0.357" stop-color="#ceffe6"/><stop offset="0.429" stop-color="#dbffea"/><stop offset="0.500" stop-color="#e9ffec"/><stop offset="0.571" stop-color="#f5ffeb"/><stop offset="0.643" stop-color="#fefee5"/><stop offset="0.714" stop-color="#fff7dd"/><stop offset="0.786" stop-color="#ffedd4"/><stop offset="0.857" stop-color="#ffe2ca"/><stop offset="0.929" stop-color="#ffd5c1"/><stop offset="1.000" stop-color="#ffc9b7"/></linearGradient><linearGradient id="cr12"><stop offset="0.000" stop-color="#9effef"/><stop offset="0.071" stop-color="#a6ffee"/><stop offset="0.143" stop-color="#afffeb"/><stop offset="0.214" stop-color="#baffe8"/><stop offset="0.286" stop-color="#c5ffe7"/><stop offset="0.357" stop-color="#d1ffe8"/><stop offset="0.429" stop-color="#deffec"/><stop offset="0.500" stop-color="#ebffef"/><stop offset="0.571" stop-color="#f7ffed"/><stop offset="0.643" stop-color="#fffde7"/><stop offset="0.714" stop-color="#fff5de"/><stop offset="0.786" stop-color="#ffebd4"/><stop offset="0.857" stop-color="#ffdfcb"/><stop offset="0.929" stop-color="#ffd3c1"/><stop offset="1.000" stop-color="#ffc6b7"/></linearGradient><linearGradient id="cr13"><stop offset="0.000" stop-color="#9ffff1"/><stop offset="0.071" stop-color="#a7fff0"/><stop offset="0.143" stop-color="#b1ffed"/><stop offset="0.214" stop-color="#bcffea"/><stop offset="0.286" stop-color="#c7ffe8"/><stop offset="0.357" stop-color="#d3ffea"/><stop offset="0.429" stop-color="#e0ffef"/><stop offset="0.500" stop-color="#edfff1"/><stop offset="0.571" stop-color="#f8fff0"/><stop offset="0.643" stop-color="#fffce9"/><stop offset="0.714" stop-color="#fff4df"/><stop offset="0.786" stop-color="#ffe9d5"/><stop offset="0.857" stop-color="#ffddcb"/><stop offset="0.929" stop-color="#ffd0c1"/><stop offset="1.000" stop-color="#ffc4b7"/></linearGradient><linearGradient id="cr14"><stop offset="0.000" stop-color="#a0fff3"/><stop offset="0.071" stop-color="#a9fff2"/><stop offset="0.143" stop-color="#b3ffee"/><stop offset="0.214" stop-color="#beffeb"/><stop offset="0.286" stop-color="#c9ffea"/><stop offset="0.357" stop-color="#d6ffec"/><stop offset="0.429" stop-color="#e3fff1"/><stop offset="0.500" stop-color="#effff4"/><stop offset="0.571" stop-color="#fafff2"/><stop offset="0.643" stop-color="#fffaea"/><stop offset="0.714" stop-color="#fff1e0"/><stop offset="0.786" stop-color="#ffe6d5"/><stop offset="0.857" stop-color="#ffdacb"/><stop offset="0.929" stop-color="#ffcdc1"/><stop offset="1.000" stop-color="#ffc1b7"/></linearGradient><linearGradient id="cr15"><stop offset="0.000" stop-color="#a1fff5"/><stop offset="0.071" stop-color="#aafff3"/><stop offset="0.143" stop-color="#b4fff0"/><stop offset="0.214" stop-color="#c0ffec"/><stop offset="0.286" stop-color="#ccffeb"/><stop offset="0.357" stop-color="#d8ffee"/><stop offset="0.429" stop-color="#e5fff3"/><stop offset="0.500" stop-color="#f1fff6"/><stop offset="0.571" stop-color="#fbfff3"/><stop offset="0.643" stop-color="#fff9ec"/><stop offset="0.714" stop-color="#ffefe1"/><stop offset="0.786" stop-color="#ffe4d5"/><stop offset="0.857" stop-color="#ffd7ca"/><stop offset="0.929" stop-color="#ffcac0"/><stop offset="1.000" stop-color="#ffbfb7"/></linearGradient><linearGradient id="cr16"><stop offset="0.000" stop-color="#a2fff6"/><stop offset="0.071" stop-color="#abfff5"/><stop offset="0.143" stop-color="#b6fff1"/><stop offset="0.214" stop-color="#c1ffee"/><stop offset="0.286" stop-color="#ceffed"/><stop offset="0.357" stop-color="#dafff0"/><stop offset="0.429" stop-color="#e6fff4"/><stop offset="0.500" stop-color="#f2fff7"/><stop offset="0.571" stop-color="#fbfdf5"/><stop offset="0.643" stop-color="#fff7ed"/><stop offset="0.714" stop-color="#ffede1"/><stop offset="0.786" stop-color="#ffe1d5"/><stop offset="0.857" stop-color="#ffd4ca"/><stop offset="0.929" stop-color="#ffc7c0"/><stop offset="1.000" stop-color="#ffbcb7"/></linearGradient><linearGradient id="cr17"><stop offset="0.000" stop-color="#a3fff8"/><stop offset="0.071" stop-color="#acfff6"/><stop offset="0.143" stop-color="#b7fff2"/><stop offset="0.214" stop-color="#c3ffef"/><stop offset="0.286" stop-color="#cfffee"/><stop offset="0.357" stop-color="#dcfff1"/><stop offset="0.429" stop-color="#e8fff6"/><stop offset="0.500" stop-color="#f3fff9"/><stop offset="0.571" stop-color="#fcfcf6"/><stop offset="0.643" stop-color="#fff4ed"/><stop offset="0.714" stop-color="#ffeae1"/><stop offset="0.786" stop-color="#ffded5"/><stop offset="0.857" stop-color="#ffd1ca"/><stop offset="0.929" stop-color="#ffc5c0"/><stop offset="1.000" stop-color="#ffbab6"/></linearGradient><linearGradient id="cr18"><stop offset="0.000" stop-color="#a4fff9"/><stop offset="0.071" stop-color="#aefff7"/><stop offset="0.143" stop-color="#b9fff4"/><stop offset="0.214" stop-color="#c5fff0"/><stop offset="0.286" stop-color="#d1fef0"/><stop offset="0.357" stop-color="#defef3"/><stop offset="0.429" stop-color="#eafff7"/><stop offset="0.500" stop-color="#f4fefa"/><stop offset="0.571" stop-color="#fdfaf7"/><stop offset="0.643" stop-color="#fff2ee"/><stop offset="0.714" stop-color="#ffe7e1"/><stop offset="0.786" stop-color="#ffdbd5"/><stop offset="0.857" stop-color="#ffcec9"/><stop offset="0.929" stop-color="#ffc2bf"/><stop offset="1.000" stop-color="#feb7b6"/></linearGradient><linearGradient id="cr19"><stop offset="0.000" stop-color="#a4fefa"/><stop offset="0.071" stop-color="#aefff8"/><stop offset="0.143" stop-color="#bafff5"/><stop offset="0.214" stop-color="#c6fef2"/><stop offset="0.286" stop-color="#d3fdf1"/><stop offset="0.357" stop-color="#dffdf4"/><stop offset="0.429" stop-color="#ebfdf8"/><stop offset="0.500" stop-color="#f5fcfb"/><stop offset="0.571" stop-color="#fdf7f7"/><stop offset="0.643" stop-color="#ffefee"/><stop offset="0.714" stop-color="#ffe5e1"/><stop offset="0.786" stop-color="#ffd8d4"/><stop offset="0.857" stop-color="#ffcbc9"/><stop offset="0.929" stop-color="#ffbfbf"/><stop offset="1.000" stop-color="#feb4b6"/></linearGradient><linearGradient id="cr20"><stop offset="0.000" stop-color="#a5fdfb"/><stop offset="0.071" stop-color="#affef9"/><stop offset="0.143" stop-color="#bbfef6"/><stop offset="0.214" stop-color="#c7fdf3"/><stop offset="0.286" stop-color="#d4fcf2"/><stop offset="0.357" stop-color="#e1fcf5"/><stop offset="0.429" stop-color="#ecfbf9"/><stop offset="0.500" stop-color="#f6fafb"/><stop offset="0.571" stop-color="#fdf5f7"/><stop offset="0.643" stop-color="#ffedee"/><stop offset="0.714" stop-color="#ffe2e1"/><stop offset="0.786" stop-color="#ffd5d4"/><stop offset="0.857" stop-color="#ffc8c8"/><stop offset="0.929" stop-color="#febcbf"/><stop offset="1.000" stop-color="#fdb2b6"/></linearGradient><linearGradient id="cr21"><stop offset="0.000" stop-color="#a5fbfc"/><stop offset="0.071" stop-color="#b0fcfa"/><stop offset="0.143" stop-color="#bcfcf7"/><stop offset="0.214" stop-color="#c9fbf4"/><stop offset="0.286" stop-color="#d5faf4"/><stop offset="0.357" stop-color="#e2faf6"/><stop offset="0.429" stop-color="#edfafa"/><stop offset="0.500" stop-color="#f7f8fc"/><stop offset="0.571" stop-color="#fdf2f7"/><stop offset="0.643" stop-color="#ffeaed"/><stop offset="0.714" stop-color="#ffdfe0"/><stop offset="0.786" stop-color="#ffd2d3"/><stop offset="0.857" stop-color="#ffc5c8"/><stop offset="0.929" stop-color="#febabe"/><stop offset="1.000" stop-color="#fdb0b6"/></linearGradient><linearGradient id="cr22"><stop offset="0.000" stop-color="#a6f9fd"/><stop offset="0.071" stop-color="#b1fafb"/><stop offset="0.143" stop-color="#bdfaf8"/><stop offset="0.214" stop-color="#cafaf5"/><stop offset="0.286" stop-color="#d7f9f5"/><stop offset="0.357" stop-color="#e3f8f7"/><stop offset="0.429" stop-color="#eef8fb"/><stop offset="0.500" stop-color="#f7f5fc"/><stop offset="0.571" stop-color="#fdf0f7"/><stop offset="0.643" stop-color="#ffe7ed"/><stop offset="0.714" stop-color="#ffdce0"/><stop offset="0.786" stop-color="#ffcfd3"/><stop offset="0.857" stop-color="#ffc3c8"/><stop offset="0.929" stop-color="#fdb7be"/><stop offset="1.000" stop-color="#fdadb6"/></linearGradient><linearGradient id="cr23"><stop offset="0.000" stop-color="#a6f7fd"/><stop offset="0.071" stop-color="#b1f8fc"/><stop offset="0.143" stop-color="#bef8f9"/><stop offset="0.214" stop-color="#cbf8f6"/><stop offset="0.286" stop-color="#d8f7f6"/><stop offset="0.357" stop-color="#e4f6f8"/><stop offset="0.429" stop-color="#eff5fb"/><stop offset="0.500" stop-color="#f7f3fc"/><stop offset="0.571" stop-color="#fdedf7"/><stop offset="0.643" stop-color="#ffe4ec"/><stop offset="0.714" stop-color="#ffd9df"/><stop offset="0.786" stop-color="#ffccd2"/><stop offset="0.857" stop-color="#fec0c7"/><stop offset="0.929" stop-color="#fdb5be"/><stop offset="1.000" stop-color="#fcabb5"/></linearGradient><linearGradient id="cr24"><stop offset="0.000" stop-color="#a6f5fe"/><stop offset="0.071" stop-color="#b2f6fc"/><stop offset="0.143" stop-color="#bef6fa"/><stop offset="0.214" stop-color="#cbf6f7"/><stop offset="0.286" stop-color="#d8f5f7"/><stop offset="0.357" stop-color="#e5f4f9"/><stop offset="0.429" stop-color="#eff3fc"/><stop offset="0.500" stop-color="#f8f0fc"/><stop offset="0.571" stop-color="#fdeaf6"/><stop offset="0.643" stop-color="#ffe1ec"/><stop offset="0.714" stop-color="#ffd6df"/><stop offset="0.786" stop-color="#ffc9d2"/><stop offset="0.857" stop-color="#febdc7"/><stop offset="0.929" stop-color="#fdb2be"/><stop offset="1.000" stop-color="#fca9b6"/></linearGradient><linearGradient id="cr25"><stop offset="0.000" stop-color="#a7f2fe"/><stop offset="0.071" stop-color="#b2f4fd"/><stop offset="0.143" stop-color="#bff4fa"/><stop offset="0.214" stop-color="#ccf4f8"/><stop offset="0.286" stop-color="#d9f3f8"/><stop offset="0.357" stop-color="#e6f2fa"/><stop offset="0.429" stop-color="#f0f1fc"/><stop offset="0.500" stop-color="#f8edfc"/><stop offset="0.571" stop-color="#fde7f6"/><stop offset="0.643" stop-color="#ffdeeb"/><stop offset="0.714" stop-color="#ffd3de"/><stop offset="0.786" stop-color="#ffc7d2"/><stop offset="0.857" stop-color="#febbc7"/><stop offset="0.929" stop-color="#fcb0be"/><stop offset="1.000" stop-color="#fca7b6"/></linearGradient><linearGradient id="cr26"><stop offset="0.000" stop-color="#a7effe"/><stop offset="0.071" stop-color="#b2f1fd"/><stop offset="0.143" stop-color="#bff2fb"/><stop offset="0.214" stop-color="#cdf1f9"/><stop offset="0.286" stop-color="#daf1f9"/><stop offset="0.357" stop-color="#e6f0fb"/><stop offset="0.429" stop-color="#f1eefd"/><stop offset="0.500" stop-color="#f8eafb"/><stop offset="0.571" stop-color="#fde4f5"/><stop offset="0.643" stop-color="#ffdbea"/><stop offset="0.714" stop-color="#ffd0de"/><stop offset="0.786" stop-color="#fec4d2"/><stop offset="0.857" stop-color="#fdb8c7"/><stop offset="0.929" stop-color="#fcaebe"/><stop offset="1.000" stop-color="#fca6b6"/></linearGradient><linearGradient id="cr27"><stop offset="0.000" stop-color="#a7edff"/><stop offset="0.071" stop-color="#b2eefd"/><stop offset="0.143" stop-color="#bfeffc"/><stop offset="0.214" stop-color="#cdeffa"/><stop offset="0.286" stop-color="#daeefa"/><stop offset="0.357" stop-color="#e7edfc"/><stop offset="0.429" stop-color="#f1ebfd"/><stop offset="0.500" stop-color="#f9e7fb"/><stop offset="0.571" stop-color="#fde1f5"/><stop offset="0.643" stop-color="#ffd8ea"/><stop offset="0.714" stop-color="#ffcdde"/><stop offset="0.786" stop-color="#fec1d2"/><stop offset="0.857" stop-color="#fdb6c8"/><stop offset="0.929" stop-color="#fcacbf"/><stop offset="1.000" stop-color="#fca4b6"/></linearGradient><linearGradient id="cr28"><stop offset="0.000" stop-color="#a7eaff"/><stop offset="0.071" stop-color="#b2ebfe"/><stop offset="0.143" stop-color="#c0ecfc"/><stop offset="0.214" stop-color="#cdedfb"/><stop offset="0.286" stop-color="#dbecfb"/><stop offset="0.357" stop-color="#e7ebfd"/><stop offset="0.429" stop-color="#f1e9fe"/><stop offset="0.500" stop-color="#f9e5fb"/><stop offset="0.571" stop-color="#fddef5"/><stop offset="0.643" stop-color="#ffd5ea"/><stop offset="0.714" stop-color="#ffcadd"/><stop offset="0.786" stop-color="#febfd2"/><stop offset="0.857" stop-color="#fdb4c8"/><stop offset="0.929" stop-color="#fcaabf"/><stop offset="1.000" stop-color="#fca2b7"/></linearGradient><linearGradient id="cr29"><stop offset="0.000" stop-color="#a7e7ff"/><stop offset="0.071" stop-color="#b2e8fe"/><stop offset="0.143" stop-color="#c0eafd"/><stop offset="0.214" stop-color="#ceeafc"/><stop offset="0.286" stop-color="#dbe9fc"/><stop offset="0.357" stop-color="#e8e8fd"/><stop offset="0.429" stop-color="#f2e6fe"/><stop offset="0.500" stop-color="#f9e2fb"/><stop offset="0.571" stop-color="#fddbf4"/><stop offset="0.643" stop-color="#ffd2ea"/><stop offset="0.714" stop-color="#ffc8de"/><stop offset="0.786" stop-color="#febdd2"/><stop offset="0.857" stop-color="#fdb2c9"/><stop offset="0.929" stop-color="#fca9c0"/><stop offset="1.000" stop-color="#fca1b7"/></linearGradient><linearGradient id="cr30"><stop offset="0.000" stop-color="#a7e4ff"/><stop offset="0.071" stop-color="#b2e5fe"/><stop offset="0.143" stop-color="#c0e7fd"/><stop offset="0.214" stop-color="#cee7fd"/><stop offset="0.286" stop-color="#dce7fd"/><stop offset="0.357" stop-color="#e8e6fe"/><stop offset="0.429" stop-color="#f2e3fe"/><stop offset="0.500" stop-color="#f9dffc"/><stop offset="0.571" stop-color="#fed8f4"/><stop offset="0.643" stop-color="#ffcfea"/><stop offset="0.714" stop-color="#ffc5de"/><stop offset="0.786" stop-color="#febbd3"/><stop offset="0.857" stop-color="#fdb0c9"/><stop offset="0.929" stop-color="#fca7c0"/><stop offset="1.000" stop-color="#fc9fb8"/></linearGradient><linearGradient id="cr31"><stop offset="0.000" stop-color="#a6e0ff"/><stop offset="0.071" stop-color="#b2e2fe"/><stop offset="0.143" stop-color="#c0e4fe"/><stop offset="0.214" stop-color="#cee4fd"/><stop offset="0.286" stop-color="#dce4fe"/><stop offset="0.357" stop-color="#e8e3ff"/><stop offset="0.429" stop-color="#f2e0ff"/><stop offset="0.500" stop-color="#fadcfc"/><stop offset="0.571" stop-color="#fed5f5"/><stop offset="0.643" stop-color="#ffcdea"/><stop offset="0.714" stop-color="#ffc3df"/><stop offset="0.786" stop-color="#feb9d4"/><stop offset="0.857" stop-color="#feafca"/><stop offset="0.929" stop-color="#fda6c1"/><stop offset="1.000" stop-color="#fc9eb8"/></linearGradient><linearGradient id="cr32"><stop offset="0.000" stop-color="#a6ddff"/><stop offset="0.071" stop-color="#b2dffe"/><stop offset="0.143" stop-color="#c0e1fe"/><stop offset="0.214" stop-color="#cee1fe"/><stop offset="0.286" stop-color="#dce1ff"/><stop offset="0.357" stop-color="#e9e0ff"/><stop offset="0.429" stop-color="#f3ddff"/><stop offset="0.500" stop-color="#fad9fc"/><stop offset="0.571" stop-color="#fed3f5"/><stop offset="0.643" stop-color="#ffcaeb"/><stop offset="0.714" stop-color="#ffc1df"/><stop offset="0.786" stop-color="#ffb7d5"/><stop offset="0.857" stop-color="#feadcb"/><stop offset="0.929" stop-color="#fda4c2"/><stop offset="1.000" stop-color="#fc9db9"/></linearGradient><linearGradient id="cr33"><stop offset="0.000" stop-color="#a6daff"/><stop offset="0.071" stop-color="#b2dcfe"/><stop offset="0.143" stop-color="#c0defe"/><stop offset="0.214" stop-color="#cedfff"/><stop offset="0.286" stop-color="#dcdeff"/><stop offset="0.357" stop-color="#e9ddff"/><stop offset="0.429" stop-color="#f3dbff"/><stop offset="0.500" stop-color="#fad6fc"/><stop offset="0.571" stop-color="#fed0f5"/><stop offset="0.643" stop-color="#ffc8eb"/><stop offset="0.714" stop-color="#ffbee0"/><stop offset="0.786" stop-color="#ffb5d6"/><stop offset="0.857" stop-color="#feaccc"/><stop offset="0.929" stop-color="#fda3c3"/><stop offset="1.000" stop-color="#fc9cba"/></linearGradient><linearGradient id="cr34"><stop offset="0.000" stop-color="#a6d7ff"/><stop offset="0.071" stop-color="#b2d9fe"/><stop offset="0.143" stop-color="#c0daff"/><stop offset="0.214" stop-color="#cfdcff"/><stop offset="0.286" stop-color="#dcdcff"/><stop offset="0.357" stop-color="#e9dbff"/><stop offset="0.429" stop-color="#f3d8ff"/><stop offset="0.500" stop-color="#fbd4fd"/><stop offset="0.571" stop-color="#ffcdf6"/><stop offset="0.643" stop-color="#ffc5ec"/><stop offset="0.714" stop-color="#ffbce1"/><stop offset="0.786" stop-color="#ffb3d7"/><stop offset="0.857" stop-color="#ffaacd"/><stop offset="0.929" stop-color="#fea2c4"/><stop offset="1.000" stop-color="#fd9bba"/></linearGradient><linearGradient id="cr35"><stop offset="0.000" stop-color="#a6d4ff"/><stop offset="0.071" stop-color="#b2d5ff"/><stop offset="0.143" stop-color="#c0d7ff"/><stop offset="0.214" stop-color="#cfd9ff"/><stop offset="0.286" stop-color="#ddd9ff"/><stop offset="0.357" stop-color="#e9d8ff"/><stop offset="0.429" stop-color="#f4d5ff"/><stop offset="0.500" stop-color="#fbd1fe"/><stop offset="0.571" stop-color="#ffcbf7"/><stop offset="0.643" stop-color="#ffc3ed"/><stop offset="0.714" stop-color="#ffbae2"/><stop offset="0.786" stop-color="#ffb1d8"/><stop offset="0.857" stop-color="#ffa9ce"/><stop offset="0.929" stop-color="#fea1c5"/><stop offset="1.000" stop-color="#fd9abb"/></linearGradient><linearGradient id="cr36"><stop offset="0.000" stop-color="#a6d1ff"/><stop offset="0.071" stop-color="#b2d2ff"/><stop offset="0.143" stop-color="#c0d4ff"/><stop offset="0.214" stop-color="#cfd6ff"/><stop offset="0.286" stop-color="#ddd6ff"/><stop offset="0.357" stop-color="#e9d5ff"/><stop offset="0.429" stop-color="#f4d3ff"/><stop offset="0.500" stop-color="#fbcefe"/><stop offset="0.571" stop-color="#ffc8f7"/><stop offset="0.643" stop-color="#ffc1ee"/><stop offset="0.714" stop-color="#ffb9e4"/><stop offset="0.786" stop-color="#ffb0d9"/><stop offset="0.857" stop-color="#ffa8d0"/><stop offset="0.929" stop-color="#fea0c6"/><stop offset="1.000" stop-color="#fd99bc"/></linearGradient><linearGradient id="cr37"><stop offset="0.000" stop-color="#a6ceff"/><stop offset="0.071" stop-color="#b2cfff"/><stop offset="0.143" stop-color="#c0d1ff"/><stop offset="0.214" stop-color="#cfd3ff"/><stop offset="0.286" stop-color="#ddd3ff"/><stop offset="0.357" stop-color="#e9d2ff"/><stop offset="0.429" stop-color="#f4d0ff"/><stop offset="0.500" stop-color="#fbccff"/><stop offset="0.571" stop-color="#ffc6f8"/><stop offset="0.643" stop-color="#ffbfef"/><stop offset="0.714" stop-color="#ffb7e5"/><stop offset="0.786" stop-color="#ffafdb"/><stop offset="0.857" stop-color="#ffa6d1"/><stop offset="0.929" stop-color="#ff9fc7"/><stop offset="1.000" stop-color="#fe99bd"/></linearGradient><linearGradient id="cr38"><stop offset="0.000" stop-color="#a7cbff"/><stop offset="0.071" stop-color="#b2ccff"/><stop offset="0.143" stop-color="#c0cfff"/><stop offset="0.214" stop-color="#cfd0ff"/><stop offset="0.286" stop-color="#ddd1ff"/><stop offset="0.357" stop-color="#ead0ff"/><stop offset="0.429" stop-color="#f4ceff"/><stop offset="0.500" stop-color="#fccaff"/><stop offset="0.571" stop-color="#ffc4f9"/><stop offset="0.643" stop-color="#ffbdf0"/><stop offset="0.714" stop-color="#ffb5e6"/><stop offset="0.786" stop-color="#ffaddc"/><stop offset="0.857" stop-color="#ffa5d2"/><stop offset="0.929" stop-color="#ff9ec8"/><stop offset="1.000" stop-color="#fe98be"/></linearGradient><linearGradient id="cr39"><stop offset="0.000" stop-color="#a7c8ff"/><stop offset="0.071" stop-color="#b3caff"/><stop offset="0.143" stop-color="#c0ccff"/><stop offset="0.214" stop-color="#cfcdff"/><stop offset="0.286" stop-color="#ddceff"/><stop offset="0.357" stop-color="#eacdff"/><stop offset="0.429" stop-color="#f4cbff"/><stop offset="0.500" stop-color="#fcc7ff"/><stop offset="0.571" stop-color="#ffc2fa"/><stop offset="0.643" stop-color="#ffbbf1"/><stop offset="0.714" stop-color="#ffb4e7"/><stop offset="0.786" stop-color="#ffacdd"/><stop offset="0.857" stop-color="#ffa4d3"/><stop offset="0.929" stop-color="#ff9dc9"/><stop offset="1.000" stop-color="#ff98bf"/></linearGradient></defs>
<g><rect x="429" y="37.50" width="273" height="5.66" fill="url(#cr0)"/><rect x="429" y="42.46" width="273" height="5.66" fill="url(#cr1)"/><rect x="429" y="47.42" width="273" height="5.66" fill="url(#cr2)"/><rect x="429" y="52.39" width="273" height="5.66" fill="url(#cr3)"/><rect x="429" y="57.35" width="273" height="5.66" fill="url(#cr4)"/><rect x="429" y="62.31" width="273" height="5.66" fill="url(#cr5)"/><rect x="429" y="67.28" width="273" height="5.66" fill="url(#cr6)"/><rect x="429" y="72.24" width="273" height="5.66" fill="url(#cr7)"/><rect x="429" y="77.20" width="273" height="5.66" fill="url(#cr8)"/><rect x="429" y="82.16" width="273" height="5.66" fill="url(#cr9)"/><rect x="429" y="87.12" width="273" height="5.66" fill="url(#cr10)"/><rect x="429" y="92.09" width="273" height="5.66" fill="url(#cr11)"/><rect x="429" y="97.05" width="273" height="5.66" fill="url(#cr12)"/><rect x="429" y="102.01" width="273" height="5.66" fill="url(#cr13)"/><rect x="429" y="106.98" width="273" height="5.66" fill="url(#cr14)"/><rect x="429" y="111.94" width="273" height="5.66" fill="url(#cr15)"/><rect x="429" y="116.90" width="273" height="5.66" fill="url(#cr16)"/><rect x="429" y="121.86" width="273" height="5.66" fill="url(#cr17)"/><rect x="429" y="126.83" width="273" height="5.66" fill="url(#cr18)"/><rect x="429" y="131.79" width="273" height="5.66" fill="url(#cr19)"/><rect x="429" y="136.75" width="273" height="5.66" fill="url(#cr20)"/><rect x="429" y="141.71" width="273" height="5.66" fill="url(#cr21)"/><rect x="429" y="146.68" width="273" height="5.66" fill="url(#cr22)"/><rect x="429" y="151.64" width="273" height="5.66" fill="url(#cr23)"/><rect x="429" y="156.60" width="273" height="5.66" fill="url(#cr24)"/><rect x="429" y="161.56" width="273" height="5.66" fill="url(#cr25)"/><rect x="429" y="166.53" width="273" height="5.66" fill="url(#cr26)"/><rect x="429" y="171.49" width="273" height="5.66" fill="url(#cr27)"/><rect x="429" y="176.45" width="273" height="5.66" fill="url(#cr28)"/><rect x="429" y="181.41" width="273" height="5.66" fill="url(#cr29)"/><rect x="429" y="186.38" width="273" height="5.66" fill="url(#cr30)"/><rect x="429" y="191.34" width="273" height="5.66" fill="url(#cr31)"/><rect x="429" y="196.30" width="273" height="5.66" fill="url(#cr32)"/><rect x="429" y="201.26" width="273" height="5.66" fill="url(#cr33)"/><rect x="429" y="206.23" width="273" height="5.66" fill="url(#cr34)"/><rect x="429" y="211.19" width="273" height="5.66" fill="url(#cr35)"/><rect x="429" y="216.15" width="273" height="5.66" fill="url(#cr36)"/><rect x="429" y="221.11" width="273" height="5.66" fill="url(#cr37)"/><rect x="429" y="226.08" width="273" height="5.66" fill="url(#cr38)"/><rect x="429" y="231.04" width="273" height="5.66" fill="url(#cr39)"/></g>
<rect x="429" y="37.5" width="273" height="198.5" fill="none" stroke="#999" stroke-width="1.5"/>
<line x1="423" y1="54.4" x2="429" y2="54.4" stroke="#aaa" stroke-width="1.5"/>
<text x="421" y="60.4" font-size="16.5" fill="#d8d8d8" text-anchor="end">0,35</text>
<line x1="423" y1="93.8" x2="429" y2="93.8" stroke="#aaa" stroke-width="1.5"/>
<text x="421" y="99.8" font-size="16.5" fill="#d8d8d8" text-anchor="end">0,34</text>
<line x1="423" y1="133.2" x2="429" y2="133.2" stroke="#aaa" stroke-width="1.5"/>
<text x="421" y="139.2" font-size="16.5" fill="#d8d8d8" text-anchor="end">0,33</text>
<line x1="423" y1="172.6" x2="429" y2="172.6" stroke="#aaa" stroke-width="1.5"/>
<text x="421" y="178.6" font-size="16.5" fill="#d8d8d8" text-anchor="end">0,32</text>
<line x1="423" y1="212.0" x2="429" y2="212.0" stroke="#aaa" stroke-width="1.5"/>
<text x="421" y="218.0" font-size="16.5" fill="#d8d8d8" text-anchor="end">0,31</text>
<line x1="439.5" y1="236" x2="439.5" y2="241" stroke="#aaa" stroke-width="1.5"/>
<text x="439.5" y="261" font-size="16.5" fill="#d8d8d8" text-anchor="middle">0,29</text>
<line x1="494.1" y1="236" x2="494.1" y2="241" stroke="#aaa" stroke-width="1.5"/>
<text x="494.1" y="261" font-size="16.5" fill="#d8d8d8" text-anchor="middle">0,3</text>
<line x1="548.8" y1="236" x2="548.8" y2="241" stroke="#aaa" stroke-width="1.5"/>
<text x="548.8" y="261" font-size="16.5" fill="#d8d8d8" text-anchor="middle">0,31</text>
<line x1="603.4" y1="236" x2="603.4" y2="241" stroke="#aaa" stroke-width="1.5"/>
<text x="603.4" y="261" font-size="16.5" fill="#d8d8d8" text-anchor="middle">0,32</text>
<line x1="658.0" y1="236" x2="658.0" y2="241" stroke="#aaa" stroke-width="1.5"/>
<text x="658.0" y="261" font-size="16.5" fill="#d8d8d8" text-anchor="middle">0,33</text>
<path d="M464.5 236 Q585 144 701 70.5" fill="none" stroke="#000" stroke-width="2.7"/>
<rect x="556.5" y="129.5" width="15" height="15" fill="#fff" stroke="#000" stroke-width="1.6"/>
<circle cx="581" cy="162" r="5.5" fill="#111"/>
<circle cx="550.5" cy="171" r="5.3" fill="#444" stroke="#222" stroke-width="1"/>
<circle cx="543" cy="171" r="5.3" fill="#3a3a3a" stroke="#222" stroke-width="1"/>
<circle cx="549" cy="167" r="5.3" fill="#666" stroke="#222" stroke-width="1"/>
<circle cx="542.5" cy="165" r="5.3" fill="#888" stroke="#222" stroke-width="1"/>
<circle cx="545" cy="161" r="5.3" fill="#aaa" stroke="#222" stroke-width="1"/>
<circle cx="543" cy="163.5" r="5.3" fill="#ccc" stroke="#222" stroke-width="1"/>
<circle cx="544" cy="165" r="5.3" fill="#ddd" stroke="#222" stroke-width="1"/>
<circle cx="548.5" cy="156.5" r="5.3" fill="#fafafa" stroke="#222" stroke-width="1"/>
</svg>
<svg width="1920" height="260" style="left:0;top:795px" font-family="Liberation Sans">
<rect x="721.5" y="5.5" width="1105.5" height="242.5" fill="#121212"/>
<defs><linearGradient id="hdr" x1="0" x2="0" y1="0" y2="1"><stop offset="0" stop-color="#333"/><stop offset="0.48" stop-color="#2c2c2c"/><stop offset="0.5" stop-color="#181818"/><stop offset="1" stop-color="#131313"/></linearGradient><linearGradient id="rd" x1="0" x2="0" y1="0" y2="1"><stop offset="0" stop-color="#484848"/><stop offset="1" stop-color="#3e3e3e"/></linearGradient><linearGradient id="rl" x1="0" x2="0" y1="0" y2="1"><stop offset="0" stop-color="#858585"/><stop offset="1" stop-color="#7a7a7a"/></linearGradient></defs>
<rect x="723" y="7.5" width="1103" height="31.700000000000045" fill="url(#hdr)"/>
<text x="940.0" y="30" font-size="17" fill="#f4f4f4" stroke="#f4f4f4" stroke-width="0.35" text-anchor="middle">0</text>
<text x="1024.3" y="30" font-size="17" fill="#f4f4f4" stroke="#f4f4f4" stroke-width="0.35" text-anchor="middle">10</text>
<text x="1108.7" y="30" font-size="17" fill="#f4f4f4" stroke="#f4f4f4" stroke-width="0.35" text-anchor="middle">20</text>
<text x="1193.0" y="30" font-size="17" fill="#f4f4f4" stroke="#f4f4f4" stroke-width="0.35" text-anchor="middle">30</text>
<text x="1277.4" y="30" font-size="17" fill="#f4f4f4" stroke="#f4f4f4" stroke-width="0.35" text-anchor="middle">40</text>
<text x="1361.8" y="30" font-size="17" fill="#f4f4f4" stroke="#f4f4f4" stroke-width="0.35" text-anchor="middle">50</text>
<text x="1446.1" y="30" font-size="17" fill="#f4f4f4" stroke="#f4f4f4" stroke-width="0.35" text-anchor="middle">60</text>
<text x="1530.4" y="30" font-size="17" fill="#f4f4f4" stroke="#f4f4f4" stroke-width="0.35" text-anchor="middle">70</text>
<text x="1614.8" y="30" font-size="17" fill="#f4f4f4" stroke="#f4f4f4" stroke-width="0.35" text-anchor="middle">80</text>
<text x="1699.2" y="30" font-size="17" fill="#f4f4f4" stroke="#f4f4f4" stroke-width="0.35" text-anchor="middle">90</text>
<text x="1783.5" y="30" font-size="17" fill="#f4f4f4" stroke="#f4f4f4" stroke-width="0.35" text-anchor="middle">100</text>
<rect x="723" y="39.2" width="1103" height="29.7" fill="url(#rd)"/>
<text x="737" y="61.0" font-size="17.5" font-weight="bold" fill="#f6f6f6">x: CIE31</text>
<text x="902.5" y="61.0" font-size="17.5" fill="#f2f2f2">0,291</text>
<text x="986.9" y="61.0" font-size="17.5" fill="#f2f2f2">0,316</text>
<text x="1071.2" y="61.0" font-size="17.5" fill="#f2f2f2">0,309</text>
<text x="1155.5" y="61.0" font-size="17.5" fill="#f2f2f2">0,310</text>
<text x="1239.9" y="61.0" font-size="17.5" fill="#f2f2f2">0,310</text>
<text x="1324.2" y="61.0" font-size="17.5" fill="#f2f2f2">0,309</text>
<text x="1408.6" y="61.0" font-size="17.5" fill="#f2f2f2">0,309</text>
<text x="1492.9" y="61.0" font-size="17.5" fill="#f2f2f2">0,308</text>
<text x="1577.3" y="61.0" font-size="17.5" fill="#f2f2f2">0,309</text>
<text x="1661.7" y="61.0" font-size="17.5" fill="#f2f2f2">0,309</text>
<text x="1746.0" y="61.0" font-size="17.5" fill="#f2f2f2">0,310</text>
<rect x="723" y="68.9" width="1103" height="29.7" fill="url(#rl)"/>
<text x="737" y="90.7" font-size="17.5" font-weight="bold" fill="#f6f6f6">y: CIE31</text>
<text x="902.5" y="90.7" font-size="17.5" fill="#f2f2f2">0,279</text>
<text x="986.9" y="90.7" font-size="17.5" fill="#f2f2f2">0,323</text>
<text x="1071.2" y="90.7" font-size="17.5" fill="#f2f2f2">0,320</text>
<text x="1155.5" y="90.7" font-size="17.5" fill="#f2f2f2">0,320</text>
<text x="1239.9" y="90.7" font-size="17.5" fill="#f2f2f2">0,322</text>
<text x="1324.2" y="90.7" font-size="17.5" fill="#f2f2f2">0,323</text>
<text x="1408.6" y="90.7" font-size="17.5" fill="#f2f2f2">0,322</text>
<text x="1492.9" y="90.7" font-size="17.5" fill="#f2f2f2">0,322</text>
<text x="1577.3" y="90.7" font-size="17.5" fill="#f2f2f2">0,323</text>
<text x="1661.7" y="90.7" font-size="17.5" fill="#f2f2f2">0,322</text>
<text x="1746.0" y="90.7" font-size="17.5" fill="#f2f2f2">0,324</text>
<rect x="723" y="98.6" width="1103" height="29.7" fill="url(#rd)"/>
<text x="737" y="120.4" font-size="17.5" font-weight="bold" fill="#f6f6f6">Y</text>
<text x="902.5" y="120.4" font-size="17.5" fill="#f2f2f2">0,731</text>
<text x="986.9" y="120.4" font-size="17.5" fill="#f2f2f2">4,059</text>
<text x="1071.2" y="120.4" font-size="17.5" fill="#f2f2f2">16,854</text>
<text x="1155.5" y="120.4" font-size="17.5" fill="#f2f2f2">39,795</text>
<text x="1239.9" y="120.4" font-size="17.5" fill="#f2f2f2">77,037</text>
<text x="1324.2" y="120.4" font-size="17.5" fill="#f2f2f2">129,828</text>
<text x="1408.6" y="120.4" font-size="17.5" fill="#f2f2f2">194,079</text>
<text x="1492.9" y="120.4" font-size="17.5" fill="#f2f2f2">276,425</text>
<text x="1577.3" y="120.4" font-size="17.5" fill="#f2f2f2">378,805</text>
<text x="1661.7" y="120.4" font-size="17.5" fill="#f2f2f2">487,369</text>
<text x="1746.0" y="120.4" font-size="17.5" fill="#f2f2f2">633,410</text>
<rect x="723" y="128.3" width="1103" height="29.7" fill="url(#rl)"/>
<text x="737" y="150.1" font-size="17.5" font-weight="bold" fill="#f6f6f6">Target Y</text>
<text x="902.5" y="150.1" font-size="17.5" fill="#f2f2f2">0,000</text>
<text x="986.9" y="150.1" font-size="17.5" fill="#f2f2f2">6,543</text>
<text x="1071.2" y="150.1" font-size="17.5" fill="#f2f2f2">20,969</text>
<text x="1155.5" y="150.1" font-size="17.5" fill="#f2f2f2">45,778</text>
<text x="1239.9" y="150.1" font-size="17.5" fill="#f2f2f2">84,160</text>
<text x="1324.2" y="150.1" font-size="17.5" fill="#f2f2f2">136,728</text>
<text x="1408.6" y="150.1" font-size="17.5" fill="#f2f2f2">201,771</text>
<text x="1492.9" y="150.1" font-size="17.5" fill="#f2f2f2">281,995</text>
<text x="1577.3" y="150.1" font-size="17.5" fill="#f2f2f2">382,470</text>
<text x="1661.7" y="150.1" font-size="17.5" fill="#f2f2f2">501,216</text>
<text x="1746.0" y="150.1" font-size="17.5" fill="#f2f2f2">633,410</text>
<rect x="723" y="158.0" width="1103" height="29.7" fill="url(#rd)"/>
<text x="737" y="179.8" font-size="17.5" font-weight="bold" fill="#f6f6f6" textLength="146" lengthAdjust="spacingAndGlyphs">Gamma Log/Log</text>
<text x="902.5" y="179.8" font-size="17.5" fill="#f2f2f2">1,278</text>
<text x="986.9" y="179.8" font-size="17.5" fill="#f2f2f2">2,212</text>
<text x="1071.2" y="179.8" font-size="17.5" fill="#f2f2f2">2,253</text>
<text x="1155.5" y="179.8" font-size="17.5" fill="#f2f2f2">2,286</text>
<text x="1239.9" y="179.8" font-size="17.5" fill="#f2f2f2">2,299</text>
<text x="1324.2" y="179.8" font-size="17.5" fill="#f2f2f2">2,300</text>
<text x="1408.6" y="179.8" font-size="17.5" fill="#f2f2f2">2,316</text>
<text x="1492.9" y="179.8" font-size="17.5" fill="#f2f2f2">2,307</text>
<text x="1577.3" y="179.8" font-size="17.5" fill="#f2f2f2">2,304</text>
<text x="1661.7" y="179.8" font-size="17.5" fill="#f2f2f2">2,540</text>
<text x="1746.0" y="179.8" font-size="17.5" fill="#f2f2f2">2,275</text>
<rect x="723" y="187.7" width="1103" height="29.7" fill="url(#rl)"/>
<text x="737" y="209.5" font-size="17.5" font-weight="bold" fill="#f6f6f6">CCT</text>
<text x="902.5" y="209.5" font-size="17.5" fill="#f2f2f2">9292,000</text>
<text x="986.9" y="209.5" font-size="17.5" fill="#f2f2f2">6378,000</text>
<text x="1071.2" y="209.5" font-size="17.5" fill="#f2f2f2">6803,000</text>
<text x="1155.5" y="209.5" font-size="17.5" fill="#f2f2f2">6717,000</text>
<text x="1239.9" y="209.5" font-size="17.5" fill="#f2f2f2">6725,000</text>
<text x="1324.2" y="209.5" font-size="17.5" fill="#f2f2f2">6756,000</text>
<text x="1408.6" y="209.5" font-size="17.5" fill="#f2f2f2">6765,000</text>
<text x="1492.9" y="209.5" font-size="17.5" fill="#f2f2f2">6820,000</text>
<text x="1577.3" y="209.5" font-size="17.5" fill="#f2f2f2">6781,000</text>
<text x="1661.7" y="209.5" font-size="17.5" fill="#f2f2f2">6766,000</text>
<text x="1746.0" y="209.5" font-size="17.5" fill="#f2f2f2">6710,000</text>
<rect x="723" y="217.4" width="1103" height="29.7" fill="url(#rd)"/>
<text x="737" y="239.2" font-size="17.5" font-weight="bold" fill="#f6f6f6">ΔE 2000</text>
<text x="902.5" y="239.2" font-size="17.5" fill="#f2f2f2">1,133</text>
<text x="986.9" y="239.2" font-size="17.5" fill="#f2f2f2">2,398</text>
<text x="1071.2" y="239.2" font-size="17.5" fill="#f2f2f2">2,433</text>
<text x="1155.5" y="239.2" font-size="17.5" fill="#f2f2f2">2,913</text>
<text x="1239.9" y="239.2" font-size="17.5" fill="#f2f2f2">2,800</text>
<text x="1324.2" y="239.2" font-size="17.5" fill="#f2f2f2">2,391</text>
<text x="1408.6" y="239.2" font-size="17.5" fill="#f2f2f2">2,737</text>
<text x="1492.9" y="239.2" font-size="17.5" fill="#f2f2f2">3,070</text>
<text x="1577.3" y="239.2" font-size="17.5" fill="#f2f2f2">2,788</text>
<text x="1661.7" y="239.2" font-size="17.5" fill="#f2f2f2">3,407</text>
<text x="1746.0" y="239.2" font-size="17.5" fill="#f2f2f2">2,834</text>
</svg>
<div class="a" style="left:0;top:1111px;width:1920px;height:55px;background:linear-gradient(#464646,#383838 35%,#2a2a2a);border-top:1px solid #2a2a2a"></div>
<div class="a" style="left:2.0px;top:1113px;width:125px;height:52px;border-radius:4px;background:linear-gradient(#a6a6a6,#8a8a8a 10%,#7a7a7a 60%,#5c5c5c);box-shadow:inset 0 0 0 1px #999"></div>
<div class="a" style="left:6.0px;top:1117px;width:117px;height:30px;border-radius:3px;background:#000000;box-shadow:0 0 1px 1px rgba(40,40,40,.5)"></div>
<div class="a" style="left:2.0px;top:1151px;width:125px;text-align:center;font-size:9px;font-weight:bold;color:#2a2a2a">0</div>
<div class="a" style="left:129.3px;top:1113px;width:125px;height:52px;border-radius:4px;background:linear-gradient(#a6a6a6,#8a8a8a 10%,#7a7a7a 60%,#5c5c5c);box-shadow:inset 0 0 0 1px #999"></div>
<div class="a" style="left:133.3px;top:1117px;width:117px;height:30px;border-radius:3px;background:#1c1c1c;box-shadow:0 0 1px 1px rgba(40,40,40,.5)"></div>
<div class="a" style="left:129.3px;top:1151px;width:125px;text-align:center;font-size:9px;font-weight:bold;color:#2a2a2a">10</div>
<div class="a" style="left:256.6px;top:1113px;width:125px;height:52px;border-radius:4px;background:linear-gradient(#a6a6a6,#8a8a8a 10%,#7a7a7a 60%,#5c5c5c);box-shadow:inset 0 0 0 1px #999"></div>
<div class="a" style="left:260.6px;top:1117px;width:117px;height:30px;border-radius:3px;background:#333333;box-shadow:0 0 1px 1px rgba(40,40,40,.5)"></div>
<div class="a" style="left:256.6px;top:1151px;width:125px;text-align:center;font-size:9px;font-weight:bold;color:#2a2a2a">20</div>
<div class="a" style="left:383.9px;top:1113px;width:125px;height:52px;border-radius:4px;background:linear-gradient(#a6a6a6,#8a8a8a 10%,#7a7a7a 60%,#5c5c5c);box-shadow:inset 0 0 0 1px #999"></div>
<div class="a" style="left:387.9px;top:1117px;width:117px;height:30px;border-radius:3px;background:#4d4d4d;box-shadow:0 0 1px 1px rgba(40,40,40,.5)"></div>
<div class="a" style="left:383.9px;top:1151px;width:125px;text-align:center;font-size:9px;font-weight:bold;color:#2a2a2a">30</div>
<div class="a" style="left:511.2px;top:1113px;width:125px;height:52px;border-radius:4px;background:linear-gradient(#a6a6a6,#8a8a8a 10%,#7a7a7a 60%,#5c5c5c);box-shadow:inset 0 0 0 1px #999"></div>
<div class="a" style="left:515.2px;top:1117px;width:117px;height:30px;border-radius:3px;background:#666666;box-shadow:0 0 1px 1px rgba(40,40,40,.5)"></div>
<div class="a" style="left:511.2px;top:1151px;width:125px;text-align:center;font-size:9px;font-weight:bold;color:#2a2a2a">40</div>
<div class="a" style="left:638.5px;top:1113px;width:125px;height:52px;border-radius:4px;background:linear-gradient(#a6a6a6,#8a8a8a 10%,#7a7a7a 60%,#5c5c5c);box-shadow:inset 0 0 0 1px #999"></div>
<div class="a" style="left:642.5px;top:1117px;width:117px;height:30px;border-radius:3px;background:#808080;box-shadow:0 0 1px 1px rgba(40,40,40,.5)"></div>
<div class="a" style="left:638.5px;top:1151px;width:125px;text-align:center;font-size:9px;font-weight:bold;color:#2a2a2a">50</div>
<div class="a" style="left:765.8px;top:1113px;width:125px;height:52px;border-radius:4px;background:linear-gradient(#a6a6a6,#8a8a8a 10%,#7a7a7a 60%,#5c5c5c);box-shadow:inset 0 0 0 1px #999"></div>
<div class="a" style="left:769.8px;top:1117px;width:117px;height:30px;border-radius:3px;background:#999999;box-shadow:0 0 1px 1px rgba(40,40,40,.5)"></div>
<div class="a" style="left:765.8px;top:1151px;width:125px;text-align:center;font-size:9px;font-weight:bold;color:#2a2a2a">60</div>
<div class="a" style="left:893.1px;top:1113px;width:125px;height:52px;border-radius:4px;background:linear-gradient(#a6a6a6,#8a8a8a 10%,#7a7a7a 60%,#5c5c5c);box-shadow:inset 0 0 0 1px #999"></div>
<div class="a" style="left:897.1px;top:1117px;width:117px;height:30px;border-radius:3px;background:#b3b3b3;box-shadow:0 0 1px 1px rgba(40,40,40,.5)"></div>
<div class="a" style="left:893.1px;top:1151px;width:125px;text-align:center;font-size:9px;font-weight:bold;color:#2a2a2a">70</div>
<div class="a" style="left:1020.4px;top:1113px;width:125px;height:52px;border-radius:4px;background:linear-gradient(#a6a6a6,#8a8a8a 10%,#7a7a7a 60%,#5c5c5c);box-shadow:inset 0 0 0 1px #999"></div>
<div class="a" style="left:1024.4px;top:1117px;width:117px;height:30px;border-radius:3px;background:#cccccc;box-shadow:0 0 1px 1px rgba(40,40,40,.5)"></div>
<div class="a" style="left:1020.4px;top:1151px;width:125px;text-align:center;font-size:9px;font-weight:bold;color:#2a2a2a">80</div>
<div class="a" style="left:1147.7px;top:1113px;width:125px;height:52px;border-radius:4px;background:linear-gradient(#a6a6a6,#8a8a8a 10%,#7a7a7a 60%,#5c5c5c);box-shadow:inset 0 0 0 1px #999"></div>
<div class="a" style="left:1151.7px;top:1117px;width:117px;height:30px;border-radius:3px;background:#e6e6e6;box-shadow:0 0 1px 1px rgba(40,40,40,.5)"></div>
<div class="a" style="left:1147.7px;top:1151px;width:125px;text-align:center;font-size:9px;font-weight:bold;color:#2a2a2a">90</div>
<div class="a" style="left:1275.0px;top:1113px;width:125px;height:53px;border-radius:4px;background:linear-gradient(#161616,#1c1c1c 50%,#2c2c2c)"></div>
<div class="a" style="left:1279.0px;top:1118px;width:117px;height:30px;border-radius:3px;background:#fff"></div>
<div class="a" style="left:1275.0px;top:1151px;width:125px;text-align:center;font-size:9px;font-weight:bold;color:#fff">100</div>
<div class="a" style="left:1648px;top:1113px;width:272px;height:53px;background:#262626"></div>
<div class="a" style="left:1649px;top:1113px;width:40px;height:15px;border-radius:4px 4px 0 0;background:linear-gradient(#a8a8a8,#8c8c8c 45%,#7a7a7a 55%,#6a6a6a)"></div>
<div class="a" style="left:1649px;top:1129px;width:40px;height:37px;background:linear-gradient(#9a9a9a,#7a7a7a 50%,#666)"></div>
<div class="a" style="left:1690px;top:1113px;width:189px;height:25px;background:linear-gradient(#a8a8a8,#8c8c8c 45%,#7a7a7a 55%,#6a6a6a)"></div>
<div class="a" style="left:1728px;top:1113px;width:1px;height:25px;background:#5a5a5a"></div>
<div class="a" style="left:1766.5px;top:1113px;width:1px;height:25px;background:#5a5a5a"></div>
<div class="a" style="left:1804px;top:1113px;width:1px;height:25px;background:#5a5a5a"></div>
<div class="a" style="left:1841px;top:1113px;width:1px;height:25px;background:#5a5a5a"></div>
<div class="a" style="left:1690px;top:1139px;width:113px;height:27px;border-radius:4px 0 0 0;background:linear-gradient(#a8a8a8,#8c8c8c 45%,#7a7a7a 55%,#6a6a6a)"></div>
<div class="a" style="left:1805px;top:1139px;width:113px;height:27px;border-radius:0 4px 0 0;background:linear-gradient(#a8a8a8,#8c8c8c 45%,#7a7a7a 55%,#6a6a6a)"></div>
<svg width="200" height="30" style="left:1700px;top:1136px" font-family="Liberation Sans"><text x="37.7" y="22.3" font-size="19" fill="#222" stroke="#222" stroke-width="0.35" textLength="42.5" lengthAdjust="spacingAndGlyphs">Back</text><text x="127.6" y="22.3" font-size="19" fill="#222" stroke="#222" stroke-width="0.35" textLength="42.7" lengthAdjust="spacingAndGlyphs">Next</text></svg>
<svg width="280" height="60" style="left:1640px;top:1106px">
<circle cx="68.5" cy="19.5" r="8" fill="#8a8a8a" stroke="#7a7a7a" stroke-width="1"/>
<circle cx="107.2" cy="19.5" r="8" fill="#8a8a8a" stroke="#7a7a7a" stroke-width="1"/>
<circle cx="145" cy="19.5" r="8" fill="#8a8a8a" stroke="#7a7a7a" stroke-width="1"/>
<circle cx="182.5" cy="19.5" r="8" fill="#8a8a8a" stroke="#7a7a7a" stroke-width="1"/>
<circle cx="220.5" cy="19.5" r="8" fill="#8a8a8a" stroke="#7a7a7a" stroke-width="1"/>
<rect x="65" y="16" width="7" height="7" fill="#2a2a2a"/>
<path d="M104.5 15.5 L111.5 19.8 L104.5 24z" fill="#2a2a2a"/>
<text x="145" y="23" font-size="9" font-weight="bold" fill="#2a2a2a" text-anchor="middle">[↔]</text>
<text x="182.5" y="24" font-size="14" font-weight="bold" fill="#2a2a2a" text-anchor="middle">∞</text>
<path d="M215.5 19 a5 5 0 0 1 9 -2 M225.5 20 a5 5 0 0 1 -9 2" fill="none" stroke="#2a2a2a" stroke-width="2"/><path d="M222.5 14 l3 3 l-3.5 1z M218.5 25 l-3 -3 l3.5 -1z" fill="#2a2a2a"/>
<circle cx="259" cy="20" r="8" fill="#2e2e2e"/>
<circle cx="29" cy="13.5" r="6" fill="#8a8a8a" stroke="#7a7a7a" stroke-width="1"/>
<path d="M25.5 15.5 L29 11.5 L32.5 15.5z" fill="#333"/>
<rect x="17" y="28" width="24" height="24" rx="3" fill="#a8a8a8" stroke="#2a2a2a" stroke-width="2"/>
<rect x="23" y="34" width="11" height="12" fill="#111"/>
<circle cx="75.5" cy="46" r="8" fill="#8a8a8a" stroke="#7a7a7a" stroke-width="1"/>
<path d="M75 42.5 L71.5 46 L75 49.5 M79 42.5 L75.5 46 L79 49.5" fill="none" stroke="#2a2a2a" stroke-width="1.6"/>
<circle cx="254" cy="46" r="8" fill="#8a8a8a" stroke="#7a7a7a" stroke-width="1"/>
<path d="M250.5 42.5 L254 46 L250.5 49.5 M254.5 42.5 L258 46 L254.5 49.5" fill="none" stroke="#2a2a2a" stroke-width="1.6"/>
</svg>
<div class="a" style="left:0;top:26px;width:1px;height:1140px;background:#7a7a7a"></div>
<div class="a" style="left:1px;top:81px;width:1px;height:1085px;background:#222"></div>
<div class="a" style="left:1918px;top:81px;width:1px;height:1085px;background:#1e1e1e"></div>
<div class="a" style="left:1919px;top:26px;width:1px;height:1140px;background:#8a8a8a"></div>
<div class="a" style="left:0;top:1165px;width:1920px;height:1px;background:#6a6a6a"></div>
</body></html>
